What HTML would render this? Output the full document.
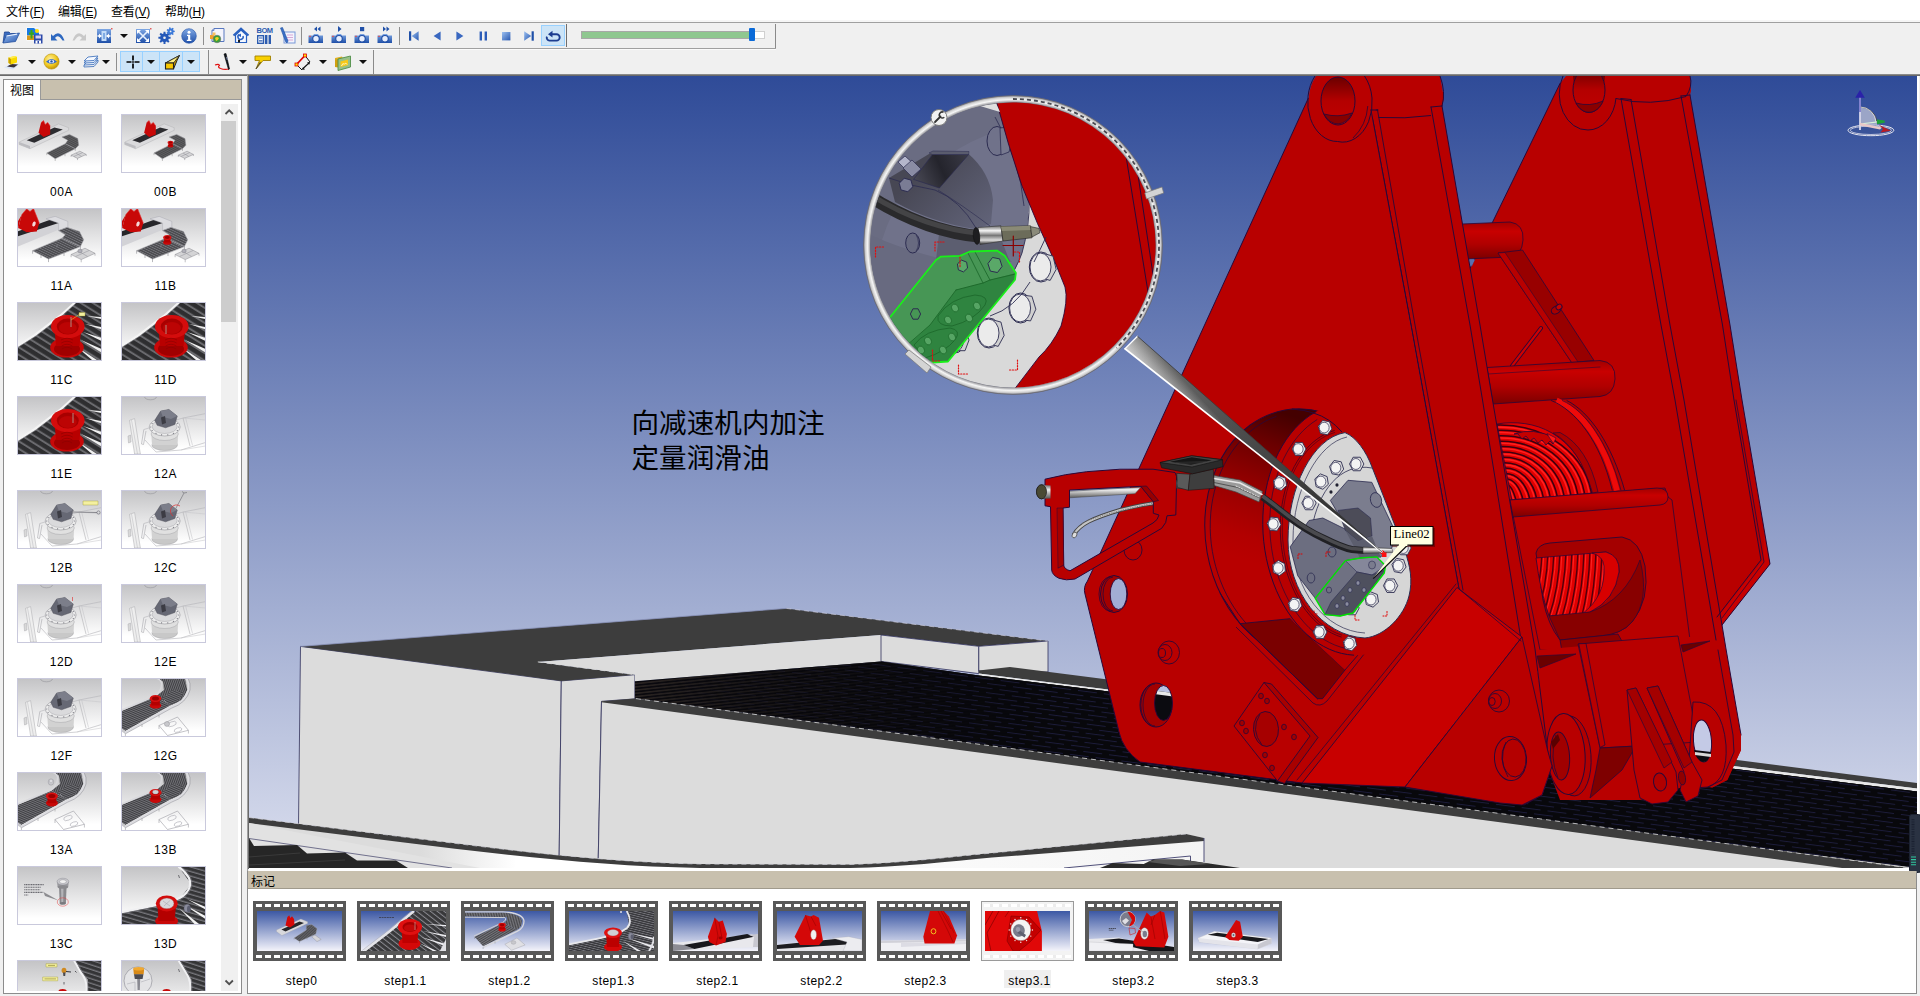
<!DOCTYPE html>
<html lang="zh-CN">
<head>
<meta charset="utf-8">
<title>3D Viewer</title>
<style>
*{box-sizing:border-box;margin:0;padding:0}
html,body{width:1920px;height:996px;overflow:hidden;background:#f0f0f0}
body{position:relative;font-family:"Liberation Sans","Noto Sans CJK SC",sans-serif;font-size:12px;color:#000}
.abs{position:absolute}
#menubar{left:0;top:0;width:1920px;height:20px;background:#fff}
#menubar span{position:absolute;top:4px;font-size:12px;line-height:16px;white-space:nowrap;letter-spacing:-0.2px}
#menubar u{text-decoration:underline;text-underline-offset:1px}
.hline{position:absolute;left:0;width:1920px;height:1px}
.vsep{position:absolute;width:1px;background:#8e8e8e}
.ico{position:absolute;width:16px;height:16px}
.dd{position:absolute;width:0;height:0;border-left:4px solid transparent;border-right:4px solid transparent;border-top:4px solid #111}
.sel{position:absolute;background:#cce4f7;border:1px solid #99d1ff}
/* left panel */
#lp{left:3px;top:79px;width:239px;height:915px;background:#fff;border:1px solid #8c8c8c}
#lptab{left:4px;top:80px;width:36px;height:21px;background:#fff}
#lpbar{left:40px;top:80px;width:201px;height:20px;background:#c8c0ae;border-left:1px solid #999;border-bottom:1px solid #999}
.thumb{position:absolute;width:85px;height:59px;border:1px solid #c9c9dc;background:linear-gradient(#c4c4c6,#ffffff 90%);overflow:hidden}
.tl{position:absolute;width:85px;text-align:center;font-size:12px;line-height:14px;letter-spacing:0.5px}
/* bottom panel */
#bp{left:247px;top:871px;width:1670px;height:123px;background:#fff;border:1px solid #8c8c8c;border-top:none}
#bpbar{left:248px;top:871px;width:1668px;height:18px;background:#c8c0ae;border-bottom:1px solid #a09a8c}
.film{position:absolute;top:901px;width:93px;height:60px;background:#585858}
.film i{position:absolute;left:4px;top:10px;width:85px;height:40px;display:block;background:linear-gradient(#3c58a4,#d8dcee 85%,#f4f4fa);overflow:hidden}
.film b{position:absolute;left:3px;width:87px;height:3px;display:block;background:repeating-linear-gradient(90deg,#fff 0,#fff 6px,#585858 6px,#585858 9px)}
.film b.t{top:3px}.film b.b{top:54px}
.fl{position:absolute;top:974px;width:93px;text-align:center;font-size:12px;line-height:14px;letter-spacing:0.45px}
#view{left:249px;top:76px;width:1668px;height:792px;overflow:hidden}
</style>
</head>
<body>
<!-- MENU -->
<div id="menubar" class="abs">
<span style="left:6px">文件(<u>F</u>)</span>
<span style="left:58px">编辑(<u>E</u>)</span>
<span style="left:111px">查看(<u>V</u>)</span>
<span style="left:165px">帮助(<u>H</u>)</span>
</div>
<div class="hline" style="top:20px;background:#f6f6f6;height:2px"></div>
<div class="hline" style="top:22px;background:#a0a0a0"></div>
<div class="hline" style="top:48px;background:#a0a0a0;width:776px"></div>
<div class="hline" style="top:49px;background:#fbfbfb;width:776px"></div>
<div class="hline" style="top:74px;background:#8a8a8a"></div>
<div class="hline" style="top:75px;background:#696969"></div>
<svg width="0" height="0" style="position:absolute"><defs>
<linearGradient id="gb" x1="0" y1="0" x2="0" y2="1"><stop offset="0" stop-color="#7fa8e4"/><stop offset="1" stop-color="#1f4fa8"/></linearGradient>
<linearGradient id="gb2" x1="0" y1="0" x2="1" y2="1"><stop offset="0" stop-color="#9cc0f0"/><stop offset="1" stop-color="#2858b0"/></linearGradient>
<linearGradient id="gy" x1="0" y1="0" x2="0" y2="1"><stop offset="0" stop-color="#ffe860"/><stop offset="1" stop-color="#d8a000"/></linearGradient>
<radialGradient id="gyr" cx="0.4" cy="0.35" r="0.7"><stop offset="0" stop-color="#fff0a0"/><stop offset="0.6" stop-color="#f0c820"/><stop offset="1" stop-color="#b88a00"/></radialGradient>
</defs></svg>
<svg class="abs" style="left:2px;top:28px" width="18" height="16" viewBox="0 0 18 16"><path d="M1,15 L2.5,4 L7,4 L8.5,5.5 L14,5.5 L14,7" fill="#3a6cc0" stroke="#1f4590" stroke-width="0.8"/><path d="M1,15 L4.5,7 L17.5,5 L13.5,13.5Z" fill="url(#gb2)" stroke="#2450a0" stroke-width="0.8"/><path d="M4.5,8 L15,6.2" stroke="#e8f0ff" stroke-width="1.2"/></svg>
<svg class="abs" style="left:26px;top:27px" width="17" height="17" viewBox="0 0 17 17"><rect x="0.5" y="0.5" width="13" height="13" fill="#fff"/><rect x="1" y="1" width="12" height="7.5" fill="#1878e0"/><path d="M8,1 L13,1 L13,6Z" fill="#e8f0ff"/><rect x="1" y="8.5" width="12" height="4.5" fill="#d89818"/><path d="M4.5,3 h2 v2.5 h1.5 v2 h-1.5 v4 h-2 v-4 h-1.5 v-2 h1.5z" fill="#38a818"/><circle cx="11" cy="4" r="2" fill="#ffe000"/><rect x="8" y="7.5" width="8.5" height="9" fill="#2a48a8"/><rect x="9.5" y="8.5" width="5.5" height="3" fill="#d8d0f0"/><rect x="9.5" y="13.5" width="5.5" height="3" fill="#fff"/><rect x="11.5" y="14" width="1.5" height="2.5" fill="#2a48a8"/></svg>
<svg class="abs" style="left:49px;top:28px" width="16" height="16" viewBox="0 0 16 16"><path d="M2,6 L2,12.5 L8.5,12.5 L6,10 Q9,5.5 13.5,12.5 L15.5,12.5 Q11,1 4,8Z" fill="#2e68c0"/></svg>
<svg class="abs" style="left:72px;top:28px" width="16" height="16" viewBox="0 0 16 16"><path d="M14,6 L14,12.5 L7.5,12.5 L10,10 Q7,5.5 2.5,12.5 L0.5,12.5 Q5,1 12,8Z" fill="#c8c8c8"/></svg>
<svg class="abs" style="left:96px;top:27px" width="17" height="17" viewBox="0 0 17 17"><rect x="1" y="2" width="14" height="14" fill="url(#gb)"/><rect x="5.5" y="4" width="5" height="10" fill="#c4dcf8"/><path d="M1.5,9 h4 M14.5,9 h-4" stroke="#fff" stroke-width="1.6"/><path d="M5.5,9 l-2.5,-2.5 v5z M10.5,9 l2.5,-2.5 v5z" fill="#fff"/><rect x="7.5" y="6" width="1" height="6" fill="#3a78d0"/><rect x="15" y="1" width="1.5" height="1.5" fill="#e06060"/></svg>
<div class="dd" style="left:119.5px;top:34px"></div>
<svg class="abs" style="left:135px;top:27px" width="17" height="17" viewBox="0 0 17 17"><rect x="1" y="2" width="14" height="14" fill="url(#gb)"/><path d="M8,9 L2.5,3.5 M8,9 L13.5,3.5 M8,9 L2.5,14.5 M8,9 L13.5,14.5" stroke="#e8f2ff" stroke-width="1.6"/><path d="M2,3 h4 l-4,4z M14,3 h-4 l4,4z M2,15 h4 l-4,-4z M14,15 h-4 l4,-4z" fill="#fff"/><rect x="15" y="1" width="1.5" height="1.5" fill="#e06060"/></svg>
<svg class="abs" style="left:158px;top:27px" width="17" height="17" viewBox="0 0 17 17"><polygon points="12.6,9.8 12.6,11.8 10.8,11.8 10.3,13.1 11.5,14.4 10.1,15.8 8.8,14.6 7.5,15.1 7.5,16.9 5.5,16.9 5.5,15.1 4.2,14.6 2.9,15.8 1.5,14.4 2.7,13.1 2.2,11.8 0.4,11.8 0.4,9.8 2.2,9.8 2.7,8.5 1.5,7.2 2.9,5.8 4.2,7.0 5.5,6.5 5.5,4.7 7.5,4.7 7.5,6.5 8.8,7.0 10.1,5.8 11.5,7.2 10.3,8.5 10.8,9.8" fill="#2458b8"/><circle cx="6.5" cy="10.8" r="1.3" fill="#f0f0f0"/><polygon points="16.7,3.7 16.7,5.1 15.5,5.3 15.1,6.1 15.7,7.2 14.7,8.1 13.7,7.2 12.8,7.4 12.3,8.6 11.0,8.3 11.1,7.0 10.4,6.4 9.2,6.8 8.6,5.6 9.6,4.9 9.6,3.9 8.6,3.2 9.2,2.0 10.4,2.4 11.1,1.8 11.0,0.5 12.3,0.2 12.8,1.4 13.7,1.6 14.7,0.7 15.7,1.6 15.1,2.7 15.5,3.5" fill="#3a78d8"/><circle cx="12.6" cy="4.4" r="0.9" fill="#f0f0f0"/></svg>
<svg class="abs" style="left:181px;top:28px" width="16" height="16" viewBox="0 0 16 16"><circle cx="8" cy="8" r="7.3" fill="url(#gb)" stroke="#2050a8" stroke-width="0.6"/><circle cx="8" cy="4.3" r="1.5" fill="#fff"/><path d="M6,6.8 h3.2 v5 h1.2 v1.2 h-4.6 v-1.2 h1.3 v-3.8 h-1.1z" fill="#fff"/></svg>
<div class="vsep" style="left:203px;top:27px;height:18px;background:#8e8e8e"></div>
<svg class="abs" style="left:209px;top:27px" width="17" height="17" viewBox="0 0 17 17"><path d="M5,1.5 h10 v13 h-12 v-11z" fill="#f4f4fc" stroke="#5878c0" stroke-width="1"/><path d="M3,3.5 h2 v-2" fill="none" stroke="#5878c0" stroke-width="0.8"/><rect x="1" y="8" width="4" height="4" fill="#f0a030"/><rect x="3.5" y="5.5" width="3" height="3" fill="#f8c060"/><circle cx="8" cy="12" r="3.8" fill="#38a038"/><path d="M6,11 q2,-2 4,0 q-1,3 -3,3z" fill="#f0d020"/><circle cx="8" cy="12" r="3.8" fill="none" stroke="#707070" stroke-width="0.6"/></svg>
<svg class="abs" style="left:232px;top:27px" width="18" height="17" viewBox="0 0 18 17"><path d="M1.5,8.5 L9,1.5 L16.5,8.5" fill="none" stroke="#2860c0" stroke-width="2"/><path d="M3.5,8 L9,3 L14.5,8 V15.5 H3.5Z" fill="#f4f8ff" stroke="#2860c0" stroke-width="1.2"/><path d="M11,9 a2.6,2.6 0 1 1 -3.5,-1.5" fill="none" stroke="#2860c0" stroke-width="1.5"/><path d="M6,8.5 l3,-2 v3.5z" fill="#2860c0"/><rect x="6" y="13" width="2" height="2.5" fill="#1a1a1a"/></svg>
<div class="abs" style="left:256.5px;top:27px;width:18px;height:8px;font:bold 7.5px/8px 'Liberation Sans',sans-serif;color:#2c5cb0;letter-spacing:-0.45px">BOM</div>
<svg class="abs" style="left:257px;top:35px" width="15" height="9" viewBox="0 0 15 9"><rect x="0.7" y="0.7" width="5.8" height="7.6" fill="#fff" stroke="#2c5cb0" stroke-width="1.4"/><path d="M2,3 h3.5 M2,5.8 h3.5" stroke="#2c5cb0" stroke-width="1.2"/><rect x="8" y="0" width="2.4" height="9" fill="#2c5cb0"/><rect x="11.6" y="0" width="2.4" height="9" fill="#2c5cb0"/></svg>
<svg class="abs" style="left:279px;top:27px" width="17" height="17" viewBox="0 0 17 17"><rect x="5" y="5" width="11" height="11" fill="#f4f4fc" stroke="#7898d8" stroke-width="1"/><path d="M8,8 h6 M8,10.5 h6 M8,13 h6" stroke="#d8a8d8" stroke-width="1"/><path d="M1.5,1 L3.5,0.5 L9,14 L8,16 L6.5,14.5Z" fill="#3a70c8" stroke="#2050a0" stroke-width="0.6"/></svg>
<div class="vsep" style="left:301px;top:27px;height:18px;background:#8e8e8e"></div>
<svg class="abs" style="left:308px;top:26px" width="16" height="18" viewBox="0 0 16 18"><path d="M9,0.5 v5 l-3,-2.5z M12.5,0.5 v5 l-3,-2.5z" fill="#2050a8"/><path d="M0.5,9.5 L5,9.5 L6,8 L10,8 L11,9.5 L15,9.5 V17 H0.5Z" fill="url(#gb)"/><circle cx="8" cy="12.8" r="3.3" fill="#e8eefc" stroke="#2050a8" stroke-width="1.2"/><rect x="1" y="9.8" width="2" height="1" fill="#e05050"/></svg>
<svg class="abs" style="left:331px;top:26px" width="16" height="18" viewBox="0 0 16 18"><path d="M7,0 v6 l3.5,-3z" fill="#2050a8"/><path d="M0.5,9.5 L5,9.5 L6,8 L10,8 L11,9.5 L15,9.5 V17 H0.5Z" fill="url(#gb)"/><circle cx="8" cy="12.8" r="3.3" fill="#e8eefc" stroke="#2050a8" stroke-width="1.2"/><rect x="1" y="9.8" width="2" height="1" fill="#e05050"/></svg>
<svg class="abs" style="left:354px;top:26px" width="16" height="18" viewBox="0 0 16 18"><rect x="6" y="1" width="4.2" height="4.2" fill="#2050a8"/><path d="M0.5,9.5 L5,9.5 L6,8 L10,8 L11,9.5 L15,9.5 V17 H0.5Z" fill="url(#gb)"/><circle cx="8" cy="12.8" r="3.3" fill="#e8eefc" stroke="#2050a8" stroke-width="1.2"/><rect x="1" y="9.8" width="2" height="1" fill="#e05050"/></svg>
<svg class="abs" style="left:377px;top:26px" width="16" height="18" viewBox="0 0 16 18"><path d="M6,0.5 v5 l3,-2.5z M9.5,0.5 v5 l3,-2.5z" fill="#2050a8"/><path d="M0.5,9.5 L5,9.5 L6,8 L10,8 L11,9.5 L15,9.5 V17 H0.5Z" fill="url(#gb)"/><circle cx="8" cy="12.8" r="3.3" fill="#e8eefc" stroke="#2050a8" stroke-width="1.2"/><rect x="1" y="9.8" width="2" height="1" fill="#e05050"/></svg>
<div class="vsep" style="left:399px;top:27px;height:18px;background:#8e8e8e"></div>
<svg class="abs" style="left:409px;top:31px" width="10" height="10" viewBox="0 0 10 10"><rect x="0" y="0.3" width="2.2" height="9.4" fill="#2050a8"/><path d="M9.6,0.3 v9.4 l-7,-4.7z" fill="url(#gb2)"/></svg>
<svg class="abs" style="left:433px;top:31px" width="8" height="10" viewBox="0 0 8 10"><path d="M7.6,0.5 v9 l-7,-4.5z" fill="#3a68c0"/></svg>
<svg class="abs" style="left:456px;top:31px" width="8" height="10" viewBox="0 0 8 10"><path d="M0.4,0.5 v9 l7,-4.5z" fill="#3a68c0"/></svg>
<svg class="abs" style="left:479px;top:31px" width="10" height="10" viewBox="0 0 10 10"><rect x="0.6" y="0.5" width="2.4" height="9" fill="#2c5cb8"/><rect x="5.6" y="0.5" width="2.4" height="9" fill="#2c5cb8"/></svg>
<svg class="abs" style="left:502px;top:32px" width="9" height="9" viewBox="0 0 9 9"><rect x="0" y="0" width="8.4" height="8.4" fill="url(#gb2)"/></svg>
<svg class="abs" style="left:524px;top:31px" width="10" height="10" viewBox="0 0 10 10"><rect x="7.6" y="0.3" width="2.2" height="9.4" fill="#2050a8"/><path d="M0.2,0.3 v9.4 l7,-4.7z" fill="url(#gb2)"/></svg>
<div class="sel" style="left:541px;top:25px;width:24px;height:21px"></div>
<svg class="abs" style="left:545px;top:30px" width="16" height="12" viewBox="0 0 16 12"><path d="M6,4.2 H11.5 a3,3 0 0 1 0,6.4 H4.5 a3,3 0 0 1 -2.6,-4" fill="none" stroke="#1c3c90" stroke-width="1.9"/><path d="M7.5,0.8 v6.8 l-4.5,-3.4z" fill="#1c3c90"/></svg>
<div class="vsep" style="left:566px;top:24px;height:23px;background:#6e6e6e"></div>
<div class="abs" style="left:581px;top:31px;width:184px;height:8px;background:#fff;border:1px solid #d0d0d0"></div>
<div class="abs" style="left:581px;top:31px;width:170px;height:8px;background:#8fc790;border:1px solid #a8a8a8;border-right:none"></div>
<div class="abs" style="left:749px;top:28px;width:6px;height:13px;background:#0a6ad8;border-radius:1px"></div>
<div class="vsep" style="left:775px;top:24px;height:24px;background:#8a8a8a"></div>
<svg class="abs" style="left:3px;top:54px" width="18" height="16" viewBox="0 0 18 16"><path d="M1,13.5 L9,9.5 L17,10 L10,15.5Z" fill="#d8e4f8"/><path d="M4,12.5 L8.5,10 L15,10.5 L11,13.5Z" fill="#3a3038"/><path d="M5.5,3.5 L12,2 L14,3 L14,8.5 L8,10.5 L5.5,9Z" fill="#f8d800"/><path d="M5.5,3.5 L8,4.8 L8,10.5 L5.5,9Z" fill="#c8a000"/><path d="M5.5,3.5 L12,2 L14,3 L8,4.8Z" fill="#ffee50"/></svg>
<div class="dd" style="left:27.5px;top:60px"></div>
<svg class="abs" style="left:43px;top:53px" width="17" height="17" viewBox="0 0 17 17"><circle cx="8.5" cy="8.5" r="7.6" fill="url(#gyr)" stroke="#b89000" stroke-width="0.6"/><path d="M3,8.7 Q8.5,3.5 14,8.7 Q8.5,13 3,8.7Z" fill="#3468c8"/><ellipse cx="8.5" cy="8.4" rx="2.8" ry="1.6" fill="#e8f0ff"/><circle cx="8.5" cy="8.4" r="1.2" fill="#2050a8"/></svg>
<div class="dd" style="left:67.5px;top:60px"></div>
<svg class="abs" style="left:83px;top:54px" width="16" height="16" viewBox="0 0 16 16"><path d="M1,11 L5,7 L15,6 L11,10.5Z" fill="#e8f0fc" stroke="#4878c0" stroke-width="0.9"/><path d="M1,9 L5,5 L15,4 L11,8.5Z" fill="#e8f0fc" stroke="#4878c0" stroke-width="0.9"/><path d="M1,7 L5,3 L15,2 L11,6.5Z" fill="#f4f8ff" stroke="#4878c0" stroke-width="0.9"/><path d="M1,11 v2 L11,12.5 L15,8 v-2" fill="none" stroke="#4878c0" stroke-width="0.9"/></svg>
<div class="dd" style="left:101.5px;top:60px"></div>
<div class="vsep" style="left:116px;top:53px;height:18px;background:#8e8e8e"></div>
<div class="sel" style="left:120px;top:51px;width:80px;height:21px"></div>
<div class="abs" style="left:142px;top:52px;width:1px;height:19px;background:#99d1ff"></div>
<div class="abs" style="left:159px;top:52px;width:1px;height:19px;background:#99d1ff"></div>
<div class="abs" style="left:182px;top:52px;width:1px;height:19px;background:#99d1ff"></div>
<svg class="abs" style="left:126px;top:55px" width="14" height="14" viewBox="0 0 14 14"><path d="M7,0.5 v5 M7,8.5 v5 M0.5,7 h5 M8.5,7 h5" stroke="#000" stroke-width="1.7"/><rect x="6.2" y="6.2" width="1.6" height="1.6" fill="#000"/></svg>
<div class="dd" style="left:147px;top:60px"></div>
<svg class="abs" style="left:164px;top:54px" width="17" height="16" viewBox="0 0 17 16"><path d="M1.5,9 L15.5,1.5 L13,6.5 L9.5,15 L9.5,9Z" fill="#c89800" stroke="#222" stroke-width="1"/><path d="M1.5,9 L15.5,1.5 L9.5,9Z" fill="#fff080" stroke="#222" stroke-width="0.8"/><rect x="1.5" y="9" width="8" height="6" fill="#f8c800" stroke="#222" stroke-width="1.1"/></svg>
<div class="dd" style="left:187px;top:60px"></div>
<div class="vsep" style="left:208px;top:50px;height:24px;background:#8a8a8a"></div>
<svg class="abs" style="left:214px;top:53px" width="18" height="18" viewBox="0 0 18 18"><path d="M1,12 q4,-1.5 4.5,0.5 q-2.5,1.5 1,3 q4,1.5 8.5,0.5" fill="none" stroke="#e01010" stroke-width="1.1"/><path d="M10,1 L12,0.5 L15.5,16 L14.5,16.5Z" fill="#101820" stroke="#000" stroke-width="0.6"/><path d="M12.5,4 l0.8,3" stroke="#8898c0" stroke-width="0.8"/></svg>
<div class="dd" style="left:238.5px;top:60px"></div>
<svg class="abs" style="left:254px;top:54px" width="18" height="16" viewBox="0 0 18 16"><path d="M1,2 H16.5 V6.5 H9 L2,15 L5.5,6.5 H1Z" fill="#f8d000" stroke="#a08000" stroke-width="0.9"/><path d="M2,15 L6.5,8" stroke="#444" stroke-width="1"/></svg>
<div class="dd" style="left:278.5px;top:60px"></div>
<svg class="abs" style="left:294px;top:53px" width="18" height="18" viewBox="0 0 18 18"><path d="M2.5,11.5 L11,2.5" stroke="#e00000" stroke-width="1.8"/><path d="M11,2.5 L16,9 M2.5,11.5 L8,17" stroke="#111" stroke-width="1"/><path d="M8.5,16 L15.5,9.5" stroke="#111" stroke-width="1.1"/><path d="M16,9 l-3,0.5 l2.2,2.2z M8,16.8 l3,-0.4 l-2,-2.2z" fill="#111"/><rect x="1" y="10" width="3" height="3" fill="#ffe000" stroke="#e00000" stroke-width="0.8"/><rect x="9.5" y="1" width="3" height="3" fill="#ffe000" stroke="#e00000" stroke-width="0.8"/></svg>
<div class="dd" style="left:318.5px;top:60px"></div>
<svg class="abs" style="left:334px;top:54px" width="18" height="17" viewBox="0 0 18 17"><path d="M1,4 L8,2.5 L9,4.5 L1,6Z" fill="#e0b020"/><path d="M1,5.5 L7,4.5 L7,14 L1,13Z" fill="#d0a010"/><path d="M4,5 L16.5,2 V13 L4,16.5Z" fill="#98c088" stroke="#50904a" stroke-width="0.9"/><path d="M6.5,7.5 L14,5.5 V11 L6.5,13Z" fill="#f8c818"/><path d="M7.5,12 q1,-3.5 3,-2 q1.5,-2 2.5,0.5" fill="none" stroke="#fff8c0" stroke-width="1"/></svg>
<div class="dd" style="left:358.5px;top:60px"></div>
<div class="vsep" style="left:373px;top:50px;height:24px;background:#8a8a8a"></div>
<!--VIEW-->
<div id="view" class="abs">
<svg width="1668" height="792" viewBox="249 76 1668 792" id="scene">
<defs>
<linearGradient id="bg" x1="0" y1="0" x2="0" y2="1"><stop offset="0" stop-color="#2f4b98"/><stop offset="1" stop-color="#dadeee"/></linearGradient>
</defs>
<rect x="249" y="76" width="1668" height="792" fill="url(#bg)"/>
<defs>
<pattern id="belt" width="26" height="9.2" patternUnits="userSpaceOnUse" patternTransform="rotate(7.3)">
<rect width="26" height="9.2" fill="#08080c"/><rect y="0" width="19" height="1" fill="#1c1c3a"/><rect x="13" y="4.6" width="19" height="1" fill="#1c1c3a"/><rect x="0" y="4.6" width="6" height="1" fill="#1c1c3a"/>
</pattern>
<pattern id="belt2" width="40" height="3.2" patternUnits="userSpaceOnUse" patternTransform="rotate(-6)">
<rect width="40" height="3.2" fill="#0c0b10"/><rect y="0" width="40" height="1.6" fill="#2c2624"/>
</pattern>
<linearGradient id="bmg" x1="635" y1="0" x2="1050" y2="0" gradientUnits="userSpaceOnUse"><stop offset="0" stop-color="#fff" stop-opacity="0"/><stop offset="1" stop-color="#fff" stop-opacity="1"/></linearGradient>
<mask id="bmask" maskUnits="userSpaceOnUse" x="600" y="600" width="1400" height="300"><rect x="600" y="600" width="1400" height="300" fill="url(#bmg)"/></mask>
<linearGradient id="beltfade" x1="603" y1="0" x2="1100" y2="0" gradientUnits="userSpaceOnUse"><stop offset="0" stop-color="#000" stop-opacity="0"/><stop offset="1" stop-color="#07070c" stop-opacity="1"/></linearGradient>
<linearGradient id="railhl" x1="249" y1="0" x2="1204" y2="0" gradientUnits="userSpaceOnUse">
<stop offset="0" stop-color="#dcdcdc"/><stop offset="0.18" stop-color="#dcdcdc"/><stop offset="0.28" stop-color="#ffffff"/><stop offset="0.5" stop-color="#ffffff"/><stop offset="1" stop-color="#f4f4f4"/></linearGradient>
</defs>
<polygon points="300.5,646.4 561.3,680.9 559,870 298,870" fill="#dcdcdc" stroke="#30305a" stroke-width="0.8" stroke-linejoin="round"/>
<polygon points="561.3,680.9 634.9,674.7 634.9,698.9 601.5,701.3 598,870 559,870" fill="#dcdcdc" stroke="#30305a" stroke-width="0.8" stroke-linejoin="round"/>
<polygon points="300.5,646.4 786.3,608.4 1048,641 978.8,646.3 881,635 537.8,661.9 634.9,674.7 561.3,680.9" fill="#3d3d3d"/>
<polygon points="537.8,661.9 881,635 881,661.4 634.9,681.2 634.9,674.7" fill="#dcdcdc"/>
<polygon points="881,635 978.8,646.3 978.8,673.6 881,661.4" fill="#dcdcdc" stroke="#30305a" stroke-width="0.8" stroke-linejoin="round"/>
<polygon points="978.8,646.3 1048,641 1048,672 978.8,671" fill="#dcdcdc" stroke="#30305a" stroke-width="0.8" stroke-linejoin="round"/>
<polygon points="978.8,670.5 1009.8,667 1917,783 1917,788.5 978.8,673.6" fill="#3d3d3d"/>
<polygon points="978.8,673.6 1917,788.5 1917,791.5 978.8,676" fill="#e8e8e8"/>
<polygon points="634.9,681.2 881,661.4 978.8,675.5 1917,791.5 1917,869 634.9,698.4" fill="url(#belt2)"/>
<polygon points="634.9,681.2 881,661.4 978.8,675.5 1917,791.5 1917,869 634.9,698.4" fill="url(#beltfade)"/>
<polygon points="634.9,681.2 881,661.4 978.8,675.5 1917,791.5 1917,869 634.9,698.4" fill="url(#belt)" mask="url(#bmask)"/>
<polygon points="601.5,701.3 1917,868 1917,870 598,870" fill="#dcdcdc"/>
<polyline points="601.5,701.3 598,870" fill="none" stroke="#30305a" stroke-width="0.8"/>
<polygon points="601.5,701.3 634.9,698.4 1917,869 1917,878 601.5,702.2" fill="#3d3d3d"/>
<polyline points="636,698.6 1917,869" fill="none" stroke="#d8d8d8" stroke-width="1" stroke-dasharray="5 4" opacity="0.8"/>
<polyline points="786.3,608.4 1048,641" fill="none" stroke="#c8c8d8" stroke-width="1" stroke-dasharray="5 4" opacity="0.7"/>
<polyline points="300.5,646.4 786.3,608.4" fill="none" stroke="#8890b8" stroke-width="0.8"/>
<polyline points="537.8,661.9 634.9,674.7" fill="none" stroke="#d8d8d8" stroke-width="1" stroke-dasharray="5 4" opacity="0.8"/>
<path d="M249,817.5 L400,836.5 C500,849 600,862 700,864 L850,864.5 C900,863 950,857 992,853 L1186,834 L1204,838 L1204,870 L249,870 Z" fill="url(#railhl)"/>
<path d="M249,817.5 L400,836.5 C500,849 600,862 700,864 L850,864.5 C900,863 950,857 992,853 L1186,834 L1204,838 L1204,841 L992,857.5 C950,861.5 900,867 850,868 L700,868 C600,866.5 500,854.5 400,842 L249,823 Z" fill="#3d3d3d"/>
<path d="M249,817.5 L400,836.5 C500,849 600,862 700,864 L850,864.5 C900,863 950,857 992,853 L1186,834" fill="none" stroke="#d0d0d8" stroke-width="1" stroke-dasharray="5 4" opacity="0.75"/>
<polyline points="1204,838 1204,862" fill="none" stroke="#50507a" stroke-width="1"/>
<polyline points="1064,868 1190.5,856 1190.5,861" fill="none" stroke="#50507a" stroke-width="1"/>
<polygon points="1100,868 1112.6,863 1143.7,864 1153,859.5 1182,859.5 1240,868" fill="#2a2a2a"/>
<polygon points="1148,862 1156,859.5 1182,859.5 1210,864 1180,866" fill="#555"/>
<polygon points="249,823 480,868 249,868" fill="#e2e2e2"/>
<polyline points="249,838.5 452,868" fill="none" stroke="#70708c" stroke-width="1"/>
<polygon points="249,838 254,846 297,845 307,853.5 345,852.5 357,860.5 396,860.5 408,868 249,868" fill="#262626"/>
<polyline points="249,857 300,853" fill="none" stroke="#3a3a3a" stroke-width="1"/>
<polyline points="249,865 345,860" fill="none" stroke="#3a3a3a" stroke-width="1"/>
<defs>
<linearGradient id="cylH" x1="0" y1="0" x2="0" y2="1"><stop offset="0" stop-color="#a00000"/><stop offset="0.25" stop-color="#c80000"/><stop offset="0.6" stop-color="#b00000"/><stop offset="1" stop-color="#7c0000"/></linearGradient>
<linearGradient id="holeG" x1="0" y1="0" x2="0" y2="1"><stop offset="0" stop-color="#6a0000"/><stop offset="0.5" stop-color="#b40000"/><stop offset="1" stop-color="#c00000"/></linearGradient>
<linearGradient id="bossG" x1="1290" y1="405" x2="1215" y2="560" gradientUnits="userSpaceOnUse"><stop offset="0" stop-color="#5e0000"/><stop offset="0.35" stop-color="#8e0000"/><stop offset="0.8" stop-color="#b40000"/><stop offset="1" stop-color="#b80000"/></linearGradient>
<pattern id="drum" width="8.2" height="8.2" patternUnits="userSpaceOnUse" patternTransform="rotate(-72)"><rect width="8.2" height="8.2" fill="#e80000"/><rect width="2.6" height="8.2" fill="#5a0010"/><rect x="2.6" width="1.6" height="8.2" fill="#b00000"/></pattern>
</defs>
<polygon points="1560,83.5 1566,76 1690,76 1691,91 1690,95 1730,325 1742,400 1770,564 1722,625 1726,649 1741,735 1741,750 1727.5,780 1712.5,787.5 1700,785 1640,780 1600,700 1470,640 1470,268.5" fill="#b80000"/>
<polygon points="1764,532 1770,564 1722,625 1721,613 1763,560" fill="#c80000"/>
<polyline points="1560,83.5 1470,268.5" fill="none" stroke="#2a0838" stroke-width="1" stroke-linecap="round"/>
<polyline points="1690,95 1730,325 1742,400 1770,564 1722,625 1726,649 1741,735" fill="none" stroke="#2a0838" stroke-width="1" stroke-linecap="round"/>
<polyline points="1681,96 1722.5,325 1734,400 1761,560 1717,617" fill="none" stroke="#2a0838" stroke-width="1" stroke-linecap="round"/>
<polyline points="1736,400 1764,562 1722,618" fill="none" stroke="#2a0838" stroke-width="0.8" stroke-linecap="round"/>
<path d="M1563,76 A28,36 0 0 0 1588,130 A28,36 0 0 0 1616,98" fill="none" stroke="#2a0838" stroke-width="1"/>
<path d="M1573,76 L1605,76 A16,23 0 0 1 1573,76Z" fill="url(#holeG)"/>
<ellipse cx="1589" cy="90" rx="16" ry="22.5" fill="url(#holeG)" stroke="#2a0838" stroke-width="1"/>
<path d="M1576,103 Q1590,107 1603,101 A16,22 0 0 1 1576,103Z" fill="#8a0000" stroke="#2a0838" stroke-width="0.8"/>
<path d="M1616,98.5 Q1650,107 1686,96.5" fill="none" stroke="#2a0838"/>
<path d="M1690,76 Q1693,86 1686,96.5" fill="none" stroke="#2a0838"/>
<polyline points="1621,98.5 1661,325 1675,400 1716,640" fill="none" stroke="#2a0838" stroke-width="1" stroke-linecap="round"/>
<polyline points="1631,99.5 1670,325 1684,400 1722,625" fill="none" stroke="#2a0838" stroke-width="1" stroke-linecap="round"/>
<polyline points="1621,98.5 1631,99.5" fill="none" stroke="#2a0838" stroke-width="1" stroke-linecap="round"/>
<polyline points="1681,96 1690,95" fill="none" stroke="#2a0838" stroke-width="1" stroke-linecap="round"/>
<path d="M1462,224 L1510,222 Q1524,224 1523,240 Q1522,256 1510,257 L1466,259 Z" fill="url(#cylH)" stroke="#2a0838" stroke-width="0.8"/>
<polygon points="1498,253 1522.5,250 1594,360.5 1571.7,362.5" fill="#980000" stroke="#2a0838" stroke-width="0.8" stroke-linejoin="round"/>
<polygon points="1498,253 1505,252.5 1578,362 1571.7,362.5" fill="#b80000" stroke="#2a0838" stroke-width="0.6" stroke-linejoin="round"/>
<ellipse cx="1556" cy="310" rx="5" ry="3.6" fill="#a80000" stroke="#2a0838" stroke-width="1" transform="rotate(-30 1556 310)"/>
<ellipse cx="1559" cy="307" rx="3.2" ry="2.6" fill="#c80000" stroke="#2a0838" stroke-width="1" transform="rotate(-30 1559 307)"/>
<polyline points="1512,366 1541,328" fill="none" stroke="#2a0838" stroke-width="4" stroke-linecap="round"/>
<polyline points="1512,366 1541,328" fill="none" stroke="#d00000" stroke-width="2.2" stroke-linecap="round"/>
<path d="M1487,367.5 L1600,360.5 Q1616,362 1615,379 Q1614,395 1600,396.5 L1493,404 Z" fill="url(#cylH)" stroke="#2a0838" stroke-width="0.8"/>
<polyline points="1488,374 1600,367" fill="none" stroke="#2a0838" stroke-width="0.6" stroke-linecap="round"/>
<polygon points="1470,259.5 1475,259.5 1471.5,267" fill="#5a70b0"/>
<path d="M1551,400.4 C1575,410 1600,440 1612.3,490.5 L1624.7,490.5 C1612,445 1590,412 1566.6,400.4Z" fill="#b00000"/>
<path d="M1556.5,400.4 C1580.5,410.5 1604.5,441 1617,490.5" fill="none" stroke="#ee0a0a" stroke-width="5.5"/>
<path d="M1551,400.4 C1575,410 1600,440 1612.3,490.5" fill="none" stroke="#2a0838" stroke-width="0.9"/>
<path d="M1566.6,400.4 C1590,412 1612,445 1624.7,490.5" fill="none" stroke="#2a0838" stroke-width="0.9"/>
<path d="M1562,400.4 C1586,411 1608.5,443 1621,490.5" fill="none" stroke="#2a0838" stroke-width="0.7"/>
<clipPath id="drumc"><path d="M1497,424 C1515,421 1535,423 1552,433 C1575,447 1588,470 1592,493 L1512,501 Z"/></clipPath>
<path d="M1497,424 C1515,421 1535,423 1552,433 C1575,447 1588,470 1592,493 L1512,501 Z" fill="#e00000"/>
<g clip-path="url(#drumc)"><path d="M1496.5,425.0 C1544.5,423.5 1589.5,454.3 1592.5,502" fill="none" stroke="#3c0010" stroke-width="1.5"/><path d="M1496.5,427.2 C1543.5,425.7 1587.3,455.3 1590.3,502" fill="none" stroke="#ff2020" stroke-width="1.6"/><path d="M1497.2,430.4 C1541.4,428.9 1582.6,457.6 1585.6,502" fill="none" stroke="#3c0010" stroke-width="1.5"/><path d="M1497.2,432.6 C1540.4,431.1 1580.4,458.6 1583.4,502" fill="none" stroke="#ff2020" stroke-width="1.6"/><path d="M1497.9,435.8 C1538.3,434.3 1575.7,461.0 1578.7,502" fill="none" stroke="#3c0010" stroke-width="1.5"/><path d="M1497.9,438.0 C1537.3,436.5 1573.5,462.0 1576.5,502" fill="none" stroke="#ff2020" stroke-width="1.6"/><path d="M1498.6,441.2 C1535.2,439.7 1568.8,464.3 1571.8,502" fill="none" stroke="#3c0010" stroke-width="1.5"/><path d="M1498.6,443.4 C1534.2,441.9 1566.6,465.3 1569.6,502" fill="none" stroke="#ff2020" stroke-width="1.6"/><path d="M1499.3,446.6 C1532.1,445.1 1561.9,467.7 1564.9,502" fill="none" stroke="#3c0010" stroke-width="1.5"/><path d="M1499.3,448.8 C1531.1,447.3 1559.7,468.7 1562.7,502" fill="none" stroke="#ff2020" stroke-width="1.6"/><path d="M1500.0,452.0 C1529.0,450.5 1555.0,471.0 1558.0,502" fill="none" stroke="#3c0010" stroke-width="1.5"/><path d="M1500.0,454.2 C1528.0,452.7 1552.8,472.0 1555.8,502" fill="none" stroke="#ff2020" stroke-width="1.6"/><path d="M1500.7,457.4 C1525.9,455.9 1548.1,474.3 1551.1,502" fill="none" stroke="#3c0010" stroke-width="1.5"/><path d="M1500.7,459.6 C1524.9,458.1 1545.9,475.3 1548.9,502" fill="none" stroke="#ff2020" stroke-width="1.6"/><path d="M1501.4,462.8 C1522.8,461.3 1541.2,477.7 1544.2,502" fill="none" stroke="#3c0010" stroke-width="1.5"/><path d="M1501.4,465.0 C1521.8,463.5 1539.0,478.7 1542.0,502" fill="none" stroke="#ff2020" stroke-width="1.6"/><path d="M1502.1,468.2 C1519.7,466.7 1534.3,481.0 1537.3,502" fill="none" stroke="#3c0010" stroke-width="1.5"/><path d="M1502.1,470.4 C1518.7,468.9 1532.1,482.0 1535.1,502" fill="none" stroke="#ff2020" stroke-width="1.6"/><path d="M1502.8,473.6 C1516.6,472.1 1527.4,484.4 1530.4,502" fill="none" stroke="#3c0010" stroke-width="1.5"/><path d="M1502.8,475.8 C1515.6,474.3 1525.2,485.4 1528.2,502" fill="none" stroke="#ff2020" stroke-width="1.6"/><path d="M1503.5,479.0 C1513.5,477.5 1520.5,487.7 1523.5,502" fill="none" stroke="#3c0010" stroke-width="1.5"/><path d="M1503.5,481.2 C1512.5,479.7 1518.3,488.7 1521.3,502" fill="none" stroke="#ff2020" stroke-width="1.6"/><path d="M1504.2,484.4 C1510.4,482.9 1513.6,491.1 1516.6,502" fill="none" stroke="#3c0010" stroke-width="1.5"/><path d="M1504.2,486.6 C1509.4,485.1 1511.4,492.1 1514.4,502" fill="none" stroke="#ff2020" stroke-width="1.6"/><path d="M1504.9,489.8 C1507.3,488.3 1506.7,494.4 1509.7,502" fill="none" stroke="#3c0010" stroke-width="1.5"/><path d="M1504.9,492.0 C1506.3,490.5 1504.5,495.4 1507.5,502" fill="none" stroke="#ff2020" stroke-width="1.6"/><path d="M1505.6,495.2 C1504.2,493.7 1499.8,497.8 1502.8,502" fill="none" stroke="#3c0010" stroke-width="1.5"/><path d="M1505.6,497.4 C1503.2,495.9 1497.6,498.8 1500.6,502" fill="none" stroke="#ff2020" stroke-width="1.6"/></g>
<path d="M1497,424 C1515,421 1535,423 1552,433 C1575,447 1588,470 1592,493 L1512,501 Z" fill="none" stroke="#2a0838" stroke-width="0.8"/>
<path d="M1518,434 l4,5 l4,-3 l4,5 l4,-3 l4,5 l4,-3 l4,5 l4,-4 l3,3 l2,-6 q-22,-11 -41,-4z" fill="#c40000" stroke="#2a0838" stroke-width="0.8"/>
<polygon points="1547,433.5 1556,438 1553.5,443.5 1549,437" fill="#ff1818" stroke="#2a0838" stroke-width="0.6" stroke-linejoin="round"/>
<path d="M1553,433 Q1580,448 1592.5,493 L1598,492 Q1588,447 1560,432.5Z" fill="#a80000" stroke="#2a0838" stroke-width="0.7"/>
<polygon points="1510,500 1665,488 1668,497 1672,500 1690,640 1600,650 1540,650" fill="#b80000" stroke="#2a0838" stroke-width="0.8" stroke-linejoin="round"/>
<path d="M1510,500 L1657,488 Q1668,488 1668,497 Q1668,504 1660,505 L1513,517Z" fill="url(#cylH)" stroke="#2a0838" stroke-width="0.8"/>
<path d="M1536,553 Q1538,544 1550,543 L1622,537 Q1640,540 1645,566 Q1650,600 1632,622 Q1622,634 1600,636 L1560,640 Q1548,625 1543,600Z" fill="#a40000" stroke="#2a0838" stroke-width="0.9"/>
<clipPath id="slotc"><path d="M1536,558 L1606,552 Q1620,556 1619,572 Q1615,600 1590,612 L1582,614 L1549,616 Q1540,590 1536,558Z"/></clipPath><path d="M1536,558 L1606,552 Q1620,556 1619,572 Q1615,600 1590,612 L1582,614 L1549,616 Q1540,590 1536,558Z" fill="#e00000"/>
<g clip-path="url(#slotc)"><path d="M1542.0,550 Q1541.0,590 1528.0,620" fill="none" stroke="#50000c" stroke-width="1.4"/><path d="M1544.0,550 Q1543.0,590 1530.0,620" fill="none" stroke="#ff2a2a" stroke-width="0.9"/><path d="M1548.0,550 Q1547.0,590 1534.6,620" fill="none" stroke="#50000c" stroke-width="1.4"/><path d="M1550.0,550 Q1549.0,590 1536.6,620" fill="none" stroke="#ff2a2a" stroke-width="0.9"/><path d="M1554.0,550 Q1553.0,590 1541.2,620" fill="none" stroke="#50000c" stroke-width="1.4"/><path d="M1556.0,550 Q1555.0,590 1543.2,620" fill="none" stroke="#ff2a2a" stroke-width="0.9"/><path d="M1560.0,550 Q1559.0,590 1547.8,620" fill="none" stroke="#50000c" stroke-width="1.4"/><path d="M1562.0,550 Q1561.0,590 1549.8,620" fill="none" stroke="#ff2a2a" stroke-width="0.9"/><path d="M1566.0,550 Q1565.0,590 1554.4,620" fill="none" stroke="#50000c" stroke-width="1.4"/><path d="M1568.0,550 Q1567.0,590 1556.4,620" fill="none" stroke="#ff2a2a" stroke-width="0.9"/><path d="M1572.0,550 Q1571.0,590 1561.0,620" fill="none" stroke="#50000c" stroke-width="1.4"/><path d="M1574.0,550 Q1573.0,590 1563.0,620" fill="none" stroke="#ff2a2a" stroke-width="0.9"/><path d="M1578.0,550 Q1577.0,590 1567.6,620" fill="none" stroke="#50000c" stroke-width="1.4"/><path d="M1580.0,550 Q1579.0,590 1569.6,620" fill="none" stroke="#ff2a2a" stroke-width="0.9"/><path d="M1584.0,550 Q1583.0,590 1574.2,620" fill="none" stroke="#50000c" stroke-width="1.4"/><path d="M1586.0,550 Q1585.0,590 1576.2,620" fill="none" stroke="#ff2a2a" stroke-width="0.9"/><path d="M1590.0,550 Q1589.0,590 1580.8,620" fill="none" stroke="#50000c" stroke-width="1.4"/><path d="M1592.0,550 Q1591.0,590 1582.8,620" fill="none" stroke="#ff2a2a" stroke-width="0.9"/><path d="M1596.0,550 Q1595.0,590 1587.4,620" fill="none" stroke="#50000c" stroke-width="1.4"/><path d="M1598.0,550 Q1597.0,590 1589.4,620" fill="none" stroke="#ff2a2a" stroke-width="0.9"/><path d="M1602.0,550 Q1601.0,590 1594.0,620" fill="none" stroke="#50000c" stroke-width="1.4"/><path d="M1604.0,550 Q1603.0,590 1596.0,620" fill="none" stroke="#ff2a2a" stroke-width="0.9"/><path d="M1608.0,550 Q1607.0,590 1600.6,620" fill="none" stroke="#50000c" stroke-width="1.4"/><path d="M1610.0,550 Q1609.0,590 1602.6,620" fill="none" stroke="#ff2a2a" stroke-width="0.9"/></g>
<path d="M1536,558 L1606,552 Q1620,556 1619,572 Q1615,600 1590,612 L1582,614 L1549,616 Q1540,590 1536,558Z" fill="none" stroke="#2a0838" stroke-width="0.8"/>
<path d="M1592,553 L1606,552 Q1620,556 1619,572 Q1615,600 1590,612 L1582,614 Q1606,596 1604,566 Q1603,556 1592,553Z" fill="#d80000" stroke="#2a0838" stroke-width="0.7"/>
<path d="M1549,616 L1590,612 Q1625,600 1640,560 Q1650,600 1632,622 Q1622,634 1600,636 L1560,640Z" fill="#880000" stroke="#2a0838" stroke-width="0.7"/>
<polygon points="1560,640 1618,634 1628,652 1563,657" fill="#8c0000" stroke="#2a0838" stroke-width="0.8" stroke-linejoin="round"/>
<polygon points="1536,650 1700,636 1741,735 1741,750 1727,780 1712,787.5 1690,785 1640,800 1560,800 1545,760" fill="#b80000"/>
<polygon points="1578,644 1678,636 1698,742 1636,746 1600,748" fill="#b80000" stroke="#2a0838" stroke-width="0.8" stroke-linejoin="round"/>
<polygon points="1600,748 1636,746 1622,770 1590,798 1596,770" fill="#7e0000" stroke="#2a0838" stroke-width="0.8" stroke-linejoin="round"/>
<ellipse cx="1572" cy="756" rx="19" ry="40" fill="#b00000" stroke="#2a0838" stroke-width="0.9" transform="rotate(-4 1572 756)"/>
<ellipse cx="1566" cy="754" rx="19" ry="40.5" fill="#b80000" stroke="#2a0838" stroke-width="1" transform="rotate(-4 1566 754)"/>
<ellipse cx="1560" cy="756" rx="9.5" ry="24" fill="#a00000" stroke="#2a0838" stroke-width="1" transform="rotate(-4 1560 756)"/>
<path d="M1556,735 Q1549,757 1558,778" fill="none" stroke="#2a0838" stroke-width="0.8"/>
<polygon points="1551,742 1558,734 1560,740 1553,749" fill="#5a0000"/>
<polygon points="1578.75,643.75 1586,643.5 1605,745 1600,747.5" fill="#b80000" stroke="#2a0838" stroke-width="0.8" stroke-linejoin="round"/>
<polygon points="1537,656 1576,654 1540,668" fill="#6a0000" stroke="#2a0838" stroke-width="0.7" stroke-linejoin="round"/>
<polygon points="1681,645 1710,641 1683,652" fill="#6a0000" stroke="#2a0838" stroke-width="0.7" stroke-linejoin="round"/>
<path d="M1693,702 Q1722,700 1726,745 Q1728,780 1708,787 Q1694,790 1688,776Z" fill="#b80000" stroke="#2a0838" stroke-width="0.9"/>
<ellipse cx="1702.5" cy="741" rx="9" ry="21" fill="#c4cae6" stroke="#2a0838" stroke-width="1" transform="rotate(-4 1702.5 741)"/>
<path d="M1694,750 L1711,752 Q1709,762 1703,762 Q1696,760 1694,750Z" fill="#0c0c12"/>
<path d="M1695,752 L1711,754 L1711,757 L1695,755Z" fill="#d8d8d8"/>
<polyline points="1718,650 1733,735 1734,752 1722,780 1708,787" fill="none" stroke="#2a0838" stroke-width="0.9" stroke-linecap="round"/>
<polygon points="1627,690 1636,688 1676,772 1678,790 1668,802 1652,804 1640,798 1634,770" fill="#b80000" stroke="#2a0838" stroke-width="0.9" stroke-linejoin="round"/>
<polygon points="1627,690 1636,688 1672,762 1664,768" fill="#a40000" stroke="#2a0838" stroke-width="0.7" stroke-linejoin="round"/>
<polygon points="1647,688 1658,686 1692,762 1702,780 1698,796 1686,802 1680,790 1684,772" fill="#b80000" stroke="#2a0838" stroke-width="0.9" stroke-linejoin="round"/>
<polygon points="1647,688 1658,686 1692,762 1684,768" fill="#a40000" stroke="#2a0838" stroke-width="0.7" stroke-linejoin="round"/>
<ellipse cx="1660" cy="782" rx="6.5" ry="9" fill="#b00000" stroke="#2a0838" stroke-width="1" transform="rotate(-8 1660 782)"/>
<ellipse cx="1682" cy="778" rx="3.5" ry="7" fill="#900000" stroke="#2a0838" stroke-width="0.8" transform="rotate(-8 1682 778)"/>
<polygon points="1360,104 1360,76 1440,76 1444,98 1442,106 1480,325 1492.5,400 1535,649 1547.5,750 1552,766 1542,795 1522,805 1459,589 1371,110" fill="#b80000"/>
<polyline points="1442,106 1480,325 1492.5,400 1535,649 1547.5,750 1551,768 1542,795 1524,805" fill="none" stroke="#2a0838" stroke-width="1" stroke-linecap="round"/>
<polyline points="1431,107 1470,325 1482.5,400 1522.5,649" fill="none" stroke="#2a0838" stroke-width="1" stroke-linecap="round"/>
<polyline points="1377.5,110 1415,325 1463,590" fill="none" stroke="#2a0838" stroke-width="0.9" stroke-linecap="round"/>
<polyline points="1371,110 1411,325 1459,589" fill="none" stroke="#2a0838" stroke-width="1" stroke-linecap="round"/>
<polyline points="1371,110 1377.5,110" fill="none" stroke="#2a0838" stroke-width="1" stroke-linecap="round"/>
<polyline points="1431,107 1442,106" fill="none" stroke="#2a0838" stroke-width="1" stroke-linecap="round"/>
<path d="M1378.5,117.5 Q1405,119 1431,115.5" fill="none" stroke="#2a0838"/>
<path d="M1440,76 Q1446,92 1442,106" fill="none" stroke="#2a0838"/>
<path d="M1308.4,98 L1087.5,581 Q1083,587 1085,594 L1119,732 Q1123,750 1140,762 L1302,783 L1459,589 L1371,110 Q1366,138 1340,141 Q1311,136 1308.4,98Z" fill="#b80000"/>
<path d="M1316,76 A29,39 0 0 0 1340,141 A29,39 0 0 0 1368,76Z" fill="#b80000"/>
<path d="M1315,76 A29.5,39.5 0 0 0 1337.5,141.5 A29.5,39.5 0 0 0 1364.5,76" fill="none" stroke="#2a0838"/>
<path d="M1353,138 Q1366.5,125 1367.8,106" fill="none" stroke="#2a0838" stroke-width="0.8"/>
<polyline points="1371,110 1411,325 1459,589" fill="none" stroke="#2a0838" stroke-width="1" stroke-linecap="round"/>
<polyline points="1371,110 1378,110" fill="none" stroke="#2a0838" stroke-width="1" stroke-linecap="round"/>
<path d="M1308.4,98 L1087.5,581 Q1083,587 1085,594 L1119,732 Q1123,750 1140,762 L1302,783" fill="none" stroke="#2a0838"/>
<ellipse cx="1338" cy="101" rx="17" ry="24" fill="url(#holeG)" stroke="#2a0838" stroke-width="1"/>
<path d="M1324,114 Q1338,118 1352,113 A17,24 0 0 1 1324,114Z" fill="#860000" stroke="#2a0838" stroke-width="0.8"/>
<polygon points="1457,587.5 1522,637 1405,787 1302,783" fill="#c80000" stroke="#2a0838" stroke-width="0.9" stroke-linejoin="round"/>
<polygon points="1522,637 1547.5,750 1552,766 1542,795 1522,805 1500,803 1405,787" fill="#b80000" stroke="#2a0838" stroke-width="0.9" stroke-linejoin="round"/>
<polyline points="1459,589 1521,641" fill="none" stroke="#2a0838" stroke-width="0.8" stroke-linecap="round"/>
<ellipse cx="1499" cy="701" rx="10.5" ry="11" fill="#b80000" stroke="#2a0838" stroke-width="0.9"/>
<ellipse cx="1495" cy="701" rx="6.5" ry="7.5" fill="#b80000" stroke="#2a0838" stroke-width="0.9"/>
<ellipse cx="1492" cy="701.5" rx="3.2" ry="4" fill="#b80000" stroke="#2a0838" stroke-width="0.9"/>
<ellipse cx="1510.5" cy="758.5" rx="16" ry="22" fill="#b80000" stroke="#2a0838" stroke-width="1" transform="rotate(-4 1510.5 758.5)"/>
<ellipse cx="1514" cy="758" rx="12" ry="19" fill="#b40000" stroke="#2a0838" stroke-width="0.9" transform="rotate(-4 1514 758)"/>
<path d="M1506,742 Q1498,760 1508,777" fill="none" stroke="#2a0838" stroke-width="0.8"/>
<defs>
<linearGradient id="bossG2" x1="1300" y1="408" x2="1225" y2="540" gradientUnits="userSpaceOnUse"><stop offset="0" stop-color="#440000"/><stop offset="0.22" stop-color="#6a0000"/><stop offset="0.55" stop-color="#980000"/><stop offset="0.85" stop-color="#b20000"/><stop offset="1" stop-color="#b80000"/></linearGradient>
<linearGradient id="pockG" x1="1230" y1="600" x2="1300" y2="640" gradientUnits="userSpaceOnUse"><stop offset="0" stop-color="#b40000"/><stop offset="1" stop-color="#9a0000"/></linearGradient>
<clipPath id="plateclip"><path d="M1308.4,98 L1087.5,581 Q1083,587 1085,594 L1119,732 Q1123,750 1140,762 L1302,783 L1459,589 L1371,110Z"/></clipPath>
</defs>
<ellipse cx="1306.8" cy="534.9" rx="101.2" ry="126.7" transform="rotate(-9.9 1306.8 534.9)" fill="url(#bossG2)" stroke="#2a0838" stroke-width="1"/>
<polyline points="1276.18,416.428 1270.39,418.762 1264.75,421.543 1259.3,424.759 1254.04,428.398 1249,432.446 1244.2,436.888 1239.65,441.706 1235.38,446.882 1231.4,452.396 1227.73,458.228 1224.37,464.354 1221.35,470.751 1218.67,477.395 1216.34,484.259 1214.38,491.319 1212.79,498.546 1211.57,505.913 1210.74,513.392 1210.29,520.954 1210.23,528.569 1210.56,536.209 1211.27,543.845 1212.36,551.446 1213.83,558.985 1215.68,566.431 1217.89,573.757 1220.46,580.934 1223.37,587.935 1226.62,594.733 1230.2,601.301 1234.09,607.615 1238.27,613.65 1242.73,619.384 1247.45,624.793 1252.41,629.859 1257.61,634.559 1263,638.878 1268.58,642.799 1274.32,646.305 1280.21,649.385" fill="none" stroke="#2a0838" stroke-width="0.8" stroke-linecap="round"/>
<polygon points="1240,623.7 1290,618.7 1345,670 1322.5,698.7 1317.5,698.7" fill="#7a0000" stroke="#2a0838" stroke-width="0.9" stroke-linejoin="round"/>
<polygon points="1290,618.7 1345,670 1378,632 1360,650 1320,640" fill="#b80000"/>
<polyline points="1220,593 1240,623.7 1317.5,698.7" fill="none" stroke="#2a0838" stroke-width="1" stroke-linecap="round"/>
<path d="M1236,627 L1313,703 Q1320,708 1327,701 L1380,634" fill="none" stroke="#2a0838" stroke-width="0.8"/>
<polyline points="1345,670 1378,632" fill="none" stroke="#2a0838" stroke-width="0.9" stroke-linecap="round"/>
<ellipse cx="1352" cy="529.4" rx="89" ry="126" transform="rotate(-4.3 1352 529.4)" fill="#b80000"/>
<polyline points="1315.59,411.966 1310.1,415.334 1304.8,419.237 1299.73,423.656 1294.9,428.571 1290.34,433.96 1286.06,439.796 1282.1,446.052 1278.47,452.7 1275.18,459.707 1272.25,467.041 1269.69,474.668 1267.52,482.552 1265.75,490.655 1264.38,498.94 1263.42,507.368 1262.88,515.899 1262.76,524.494 1263.05,533.111 1263.76,541.711 1264.89,550.254 1266.43,558.698 1268.36,567.005 1270.69,575.136 1273.4,583.052 1276.48,590.717 1279.91,598.094 1283.68,605.148 1287.77,611.848 1292.17,618.16 1296.84,624.056 1301.77,629.509 1306.94,634.491 1312.32,638.981 1317.88,642.956 1323.61,646.399 1329.47,649.293 1335.43,651.625 1341.47,653.383 1347.56,654.559 1353.68,655.149" fill="none" stroke="#2a0838" stroke-width="1" stroke-linecap="round"/>
<polyline points="1316.9,419.708 1311.97,423.056 1307.22,426.873 1302.68,431.144 1298.36,435.849 1294.29,440.969 1290.49,446.48 1286.96,452.358 1283.72,458.577 1280.8,465.111 1278.2,471.93 1275.93,479.004 1274,486.303 1272.43,493.793 1271.21,501.443 1270.36,509.219 1269.88,517.085 1269.76,525.009 1270.02,532.955 1270.64,540.887 1271.64,548.772 1272.99,556.574 1274.7,564.259 1276.76,571.794 1279.16,579.145 1281.89,586.28 1284.93,593.167 1288.28,599.776 1291.92,606.079 1295.83,612.047 1300,617.655 1304.4,622.877 1309.02,627.691 1313.84,632.075 1318.84,636.01 1323.99,639.479 1329.27,642.467 1334.66,644.96 1340.14,646.948 1345.68,648.421 1351.25,649.374" fill="none" stroke="#2a0838" stroke-width="0.7" stroke-linecap="round"/>
<polyline points="1334.24,430.567 1329.53,432.175 1324.92,434.261 1320.43,436.815 1316.1,439.824 1311.93,443.276 1307.95,447.153 1304.18,451.437 1300.63,456.109 1297.32,461.146 1294.27,466.525 1291.49,472.22 1289,478.205 1286.8,484.452 1284.9,490.932 1283.32,497.613 1282.07,504.465 1281.14,511.456 1280.54,518.552 1280.28,525.721 1280.35,532.928 1280.76,540.141 1281.51,547.325 1282.58,554.446 1283.98,561.472 1285.7,568.369 1287.73,575.104 1290.07,581.646 1292.69,587.965 1295.59,594.031 1298.76,599.816 1302.17,605.291 1305.82,610.432 1309.69,615.215 1313.75,619.617 1318,623.616 1322.4,627.196 1326.94,630.338 1331.6,633.029 1336.36,635.255 1341.19,637.006" fill="none" stroke="#5a0018" stroke-width="1" stroke-linecap="round"/>
<polyline points="1334.67,432.521 1330.09,434.095 1325.61,436.139 1321.25,438.641 1317.04,441.59 1312.99,444.973 1309.12,448.774 1305.46,452.974 1302.01,457.555 1298.8,462.494 1295.84,467.768 1293.14,473.354 1290.72,479.223 1288.59,485.35 1286.75,491.705 1285.22,498.258 1284,504.979 1283.1,511.836 1282.52,518.797 1282.27,525.83 1282.35,532.901 1282.76,539.976 1283.48,547.024 1284.53,554.011 1285.9,560.904 1287.58,567.671 1289.56,574.279 1291.83,580.699 1294.38,586.9 1297.21,592.852 1300.29,598.529 1303.61,603.903 1307.16,608.948 1310.92,613.643 1314.88,617.963 1319.01,621.89 1323.29,625.405 1327.71,628.49 1332.24,631.133 1336.86,633.32 1341.56,635.041" fill="none" stroke="#5a0018" stroke-width="0.8" stroke-linecap="round"/>
<path d="M1292,409 Q1305,410 1313.5,413 Q1330,418 1342,432" fill="none" stroke="#2a0838" stroke-width="1"/>
<path d="M1345,432.6 C1312,438 1288,488 1288,540 C1288,592 1322,636 1365,638 C1385,636 1404,616 1409,596 C1413,580 1410,566 1405,551 L1372,467 C1366,451 1356,437 1345,432.6Z" fill="#d6d6d6" stroke="#2c2c50" stroke-width="1"/>
<path d="M1347,437 C1318,443 1293,490 1293,540 C1293,590 1325,631 1365,633" fill="none" stroke="#2c2c50" stroke-width="0.7"/>
<path d="M1372,468 C1340,462 1318,492 1312,528 C1310,560 1320,590 1345,606" fill="none" stroke="#2c2c50" stroke-width="0.8"/>
<polygon points="1331.89,428.92 1327.39,434.742 1320.51,433.422 1318.11,426.28 1322.61,420.458 1329.49,421.778" fill="#e4e4e4" stroke="#2c2c50" stroke-width="0.9" stroke-linejoin="round"/><ellipse cx="1324.2" cy="427.6" rx="4.93504" ry="5.319999999999999" fill="#f4f4f4" stroke="#2c2c50" stroke-width="0.7"/>
<polygon points="1305.99,449 1302.5,455.582 1295.5,455.582 1292.01,449 1295.5,442.418 1302.5,442.418" fill="#e4e4e4" stroke="#2c2c50" stroke-width="0.9" stroke-linejoin="round"/><ellipse cx="1298.2" cy="449" rx="4.93504" ry="5.319999999999999" fill="#f4f4f4" stroke="#2c2c50" stroke-width="0.7"/>
<polygon points="1286.57,485.599 1281.21,490.485 1274.64,487.885 1273.43,480.401 1278.79,475.515 1285.36,478.115" fill="#e4e4e4" stroke="#2c2c50" stroke-width="0.9" stroke-linejoin="round"/><ellipse cx="1279.2" cy="483" rx="4.93504" ry="5.319999999999999" fill="#f4f4f4" stroke="#2c2c50" stroke-width="0.7"/>
<polygon points="1280.97,524.662 1276.95,530.888 1269.99,530.226 1267.03,523.338 1271.05,517.112 1278.01,517.774" fill="#e4e4e4" stroke="#2c2c50" stroke-width="0.9" stroke-linejoin="round"/><ellipse cx="1273.2" cy="524" rx="4.93504" ry="5.319999999999999" fill="#f4f4f4" stroke="#2c2c50" stroke-width="0.7"/>
<polygon points="1285.34,571.212 1279.61,575.571 1273.27,572.359 1272.66,564.788 1278.39,560.429 1284.73,563.641" fill="#e4e4e4" stroke="#2c2c50" stroke-width="0.9" stroke-linejoin="round"/><ellipse cx="1278.2" cy="568" rx="4.93504" ry="5.319999999999999" fill="#f4f4f4" stroke="#2c2c50" stroke-width="0.7"/>
<polygon points="1301.89,605.92 1297.39,611.742 1290.51,610.422 1288.11,603.28 1292.61,597.458 1299.49,598.778" fill="#e4e4e4" stroke="#2c2c50" stroke-width="0.9" stroke-linejoin="round"/><ellipse cx="1294.2" cy="604.6" rx="4.93504" ry="5.319999999999999" fill="#f4f4f4" stroke="#2c2c50" stroke-width="0.7"/>
<polygon points="1326.99,632 1323.5,638.582 1316.5,638.582 1313.01,632 1316.5,625.418 1323.5,625.418" fill="#e4e4e4" stroke="#2c2c50" stroke-width="0.9" stroke-linejoin="round"/><ellipse cx="1319.2" cy="632" rx="4.93504" ry="5.319999999999999" fill="#f4f4f4" stroke="#2c2c50" stroke-width="0.7"/>
<polygon points="1356.75,645.467 1351.81,650.841 1345.06,648.874 1343.25,641.533 1348.19,636.159 1354.94,638.126" fill="#e4e4e4" stroke="#2c2c50" stroke-width="0.9" stroke-linejoin="round"/><ellipse cx="1349.2" cy="643.5" rx="4.93504" ry="5.319999999999999" fill="#f4f4f4" stroke="#2c2c50" stroke-width="0.7"/>
<polygon points="1343.67,469.154 1339.05,475.13 1331.99,473.775 1329.53,466.446 1334.15,460.47 1341.21,461.825" fill="#dcdcdc" stroke="#2c2c50" stroke-width="0.9" stroke-linejoin="round"/><ellipse cx="1335.8" cy="467.8" rx="5.04912" ry="5.46" fill="#f4f4f4" stroke="#2c2c50" stroke-width="0.7"/>
<polygon points="1363.88,464 1360.29,470.755 1353.11,470.755 1349.52,464 1353.11,457.245 1360.29,457.245" fill="#dcdcdc" stroke="#2c2c50" stroke-width="0.9" stroke-linejoin="round"/><ellipse cx="1355.9" cy="464" rx="5.04912" ry="5.46" fill="#f4f4f4" stroke="#2c2c50" stroke-width="0.7"/>
<polygon points="1328.34,484.268 1322.85,489.282 1316.1,486.614 1314.86,478.932 1320.35,473.918 1327.1,476.586" fill="#dcdcdc" stroke="#2c2c50" stroke-width="0.9" stroke-linejoin="round"/><ellipse cx="1320.8" cy="481.6" rx="5.04912" ry="5.46" fill="#f4f4f4" stroke="#2c2c50" stroke-width="0.7"/>
<polygon points="1316.18,503 1312.59,509.755 1305.41,509.755 1301.82,503 1305.41,496.245 1312.59,496.245" fill="#dcdcdc" stroke="#2c2c50" stroke-width="0.9" stroke-linejoin="round"/><ellipse cx="1308.2" cy="503" rx="5.04912" ry="5.46" fill="#f4f4f4" stroke="#2c2c50" stroke-width="0.7"/>
<polygon points="1406.07,567.054 1401.45,573.03 1394.39,571.675 1391.93,564.346 1396.55,558.37 1403.61,559.725" fill="#dcdcdc" stroke="#2c2c50" stroke-width="0.9" stroke-linejoin="round"/><ellipse cx="1398.2" cy="565.7" rx="5.04912" ry="5.46" fill="#f4f4f4" stroke="#2c2c50" stroke-width="0.7"/>
<polygon points="1397.78,585.7 1394.19,592.455 1387.01,592.455 1383.42,585.7 1387.01,578.945 1394.19,578.945" fill="#dcdcdc" stroke="#2c2c50" stroke-width="0.9" stroke-linejoin="round"/><ellipse cx="1389.8" cy="585.7" rx="5.04912" ry="5.46" fill="#f4f4f4" stroke="#2c2c50" stroke-width="0.7"/>
<polygon points="1378.54,602.168 1373.05,607.182 1366.3,604.514 1365.06,596.832 1370.55,591.818 1377.3,594.486" fill="#dcdcdc" stroke="#2c2c50" stroke-width="0.9" stroke-linejoin="round"/><ellipse cx="1371.0" cy="599.5" rx="5.04912" ry="5.46" fill="#f4f4f4" stroke="#2c2c50" stroke-width="0.7"/>
<polygon points="1411.18,548 1407.59,554.755 1400.41,554.755 1396.82,548 1400.41,541.245 1407.59,541.245" fill="#dcdcdc" stroke="#2c2c50" stroke-width="0.9" stroke-linejoin="round"/><ellipse cx="1403.2" cy="548" rx="5.04912" ry="5.46" fill="#f4f4f4" stroke="#2c2c50" stroke-width="0.7"/>
<polygon points="1359.18,608 1355.59,614.755 1348.41,614.755 1344.82,608 1348.41,601.245 1355.59,601.245" fill="#dcdcdc" stroke="#2c2c50" stroke-width="0.9" stroke-linejoin="round"/><ellipse cx="1351.2" cy="608" rx="5.04912" ry="5.46" fill="#f4f4f4" stroke="#2c2c50" stroke-width="0.7"/>
<ellipse cx="1337" cy="485" rx="1.6" ry="1.8" fill="#202030"/>
<ellipse cx="1331" cy="492" rx="1.6" ry="1.8" fill="#202030"/>
<polygon points="1330.4,500.4 1348,480.3 1371.8,482.3 1393,526.8 1391.9,548 1380.6,556.9 1348,530.5" fill="#7b7d8e" stroke="#2c2c50" stroke-width="0.8" stroke-linejoin="round"/>
<polygon points="1290.2,546.8 1309,520.5 1322.8,518 1348,530.5 1380.6,556.9 1345.4,560.6 1315.3,598.3 1297.7,575.7" fill="#6c6e80" stroke="#2c2c50" stroke-width="0.8" stroke-linejoin="round"/>
<polygon points="1338,510.4 1358,508 1370.5,518 1372,536 1358,541 1345.4,530.5" fill="#4c4c58" stroke="#2c2c50" stroke-width="0.6" stroke-linejoin="round"/>
<polygon points="1345.4,530.5 1358,541 1372,536 1380.6,556.9 1360,558" fill="#5c5e6e"/>
<ellipse cx="1376" cy="500" rx="5.5" ry="7.5" fill="#7b7d8e" stroke="#2c2c50" stroke-width="0.8" transform="rotate(-15 1376 500)"/>
<ellipse cx="1332" cy="552" rx="4" ry="5" fill="#6c6e80" stroke="#2c2c50" stroke-width="0.8"/>
<ellipse cx="1311" cy="578" rx="3.8" ry="5" fill="#6c6e80" stroke="#2c2c50" stroke-width="0.8"/>
<polygon points="1315.3,598.3 1345.4,560.6 1360.5,558 1376.8,556.9 1385.6,565.7 1384.3,573 1353,613 1340,616 1325,614.6" fill="#6f7182"/>
<polygon points="1345.4,560.6 1360.5,558 1376.8,556.9 1385.6,565.7 1372,575 1357,572" fill="#85879a" stroke="#2c2c50" stroke-width="0.6" stroke-linejoin="round"/>
<polygon points="1357,572 1372,575 1385,570 1353,613 1340,616 1325,614.6 1331,602" fill="#4e505e" stroke="#2c2c50" stroke-width="0.6" stroke-linejoin="round"/>
<ellipse cx="1343" cy="598" rx="2" ry="2.3" fill="#8a8c9e" stroke="#2c2c50" stroke-width="0.6"/>
<ellipse cx="1350" cy="590" rx="2" ry="2.3" fill="#8a8c9e" stroke="#2c2c50" stroke-width="0.6"/>
<ellipse cx="1337" cy="606" rx="2" ry="2.3" fill="#8a8c9e" stroke="#2c2c50" stroke-width="0.6"/>
<ellipse cx="1347" cy="604" rx="2" ry="2.3" fill="#8a8c9e" stroke="#2c2c50" stroke-width="0.6"/>
<ellipse cx="1358" cy="583" rx="2" ry="2.3" fill="#8a8c9e" stroke="#2c2c50" stroke-width="0.6"/>
<ellipse cx="1364" cy="590" rx="2" ry="2.3" fill="#8a8c9e" stroke="#2c2c50" stroke-width="0.6"/>
<ellipse cx="1329" cy="590" rx="2.6" ry="3" fill="none" stroke="#2c2c50" stroke-width="0.7"/>
<ellipse cx="1372" cy="565" rx="3.5" ry="4" fill="#7a7c8e" stroke="#2c2c50" stroke-width="0.6"/>
<polygon points="1315.3,598.3 1345.4,560.6 1360.5,558 1376.8,556.9 1385.6,565.7 1384.3,573 1353,613 1340,616 1325,614.6" fill="none" stroke="#00e400" stroke-width="1.4" stroke-linejoin="round"/>
<polyline points="1302,554 1298,554 1298,559" fill="none" stroke="#e00000" stroke-width="1" stroke-linecap="round" stroke-dasharray="1 1.5"/>
<polyline points="1330,552 1326,552 1326,557" fill="none" stroke="#e00000" stroke-width="1" stroke-linecap="round" stroke-dasharray="1 1.5"/>
<polyline points="1383,616 1387,616 1387,611" fill="none" stroke="#e00000" stroke-width="1" stroke-linecap="round" stroke-dasharray="1 1.5"/>
<polyline points="1359,620 1355,620 1355,615" fill="none" stroke="#e00000" stroke-width="1" stroke-linecap="round" stroke-dasharray="1 1.5"/>
<polyline points="1317,614 1314,614 1314,610" fill="none" stroke="#e00000" stroke-width="1" stroke-linecap="round" stroke-dasharray="1 1.5"/>
<polyline points="1456,584 1297,780" fill="none" stroke="#2a0838" stroke-width="0.8" stroke-linecap="round"/>
<ellipse cx="1114" cy="594" rx="13.5" ry="18.5" fill="#a20000" stroke="#2a0838" stroke-width="1"/>
<path d="M1110,577 A11,17 0 0 0 1110,611" fill="none" stroke="#2a0838" stroke-width="0.8"/>
<path d="M1113,577 A10,17 0 0 0 1113,611" fill="none" stroke="#2a0838" stroke-width="0.8"/>
<ellipse cx="1118.5" cy="594" rx="8.3" ry="15.5" fill="#a2add4" stroke="#2a0838" stroke-width="0.9"/>
<ellipse cx="1156" cy="705" rx="16" ry="22" fill="#a20000" stroke="#2a0838" stroke-width="1"/>
<path d="M1151,684.5 A13,21 0 0 0 1151,725.5" fill="none" stroke="#2a0838" stroke-width="0.8"/>
<path d="M1155,684 A12,21 0 0 0 1155,726" fill="none" stroke="#2a0838" stroke-width="0.8"/>
<clipPath id="h2"><ellipse cx="1163.5" cy="703" rx="9" ry="17.5"/></clipPath>
<g clip-path="url(#h2)"><rect x="1150" y="680" width="30" height="50" fill="#0b0b10"/><polygon points="1150,680 1180,680 1180,694 1150,690" fill="#b9c1e0"/><polygon points="1150,690 1180,694 1180,697.5 1150,693.5" fill="#e8e8e8"/></g>
<ellipse cx="1163.5" cy="703" rx="9" ry="17.5" fill="none" stroke="#2a0838" stroke-width="0.9"/>
<ellipse cx="1169" cy="652.5" rx="10.5" ry="11.5" fill="#b80000" stroke="#2a0838" stroke-width="0.9"/>
<ellipse cx="1165" cy="652.5" rx="7" ry="8" fill="#b80000" stroke="#2a0838" stroke-width="0.9"/>
<ellipse cx="1162" cy="653" rx="3.5" ry="4.5" fill="#b80000" stroke="#2a0838" stroke-width="0.9"/>
<ellipse cx="1133" cy="550" rx="9" ry="10" fill="#b80000" stroke="#2a0838" stroke-width="0.9"/>
<polygon points="1264,682.5 1271.5,684 1318,737.5 1284.5,783.5 1277.5,781" fill="#a80000" stroke="#2a0838" stroke-width="0.9" stroke-linejoin="round"/>
<polygon points="1264,682.5 1310,736 1277.5,781 1234,726" fill="#b80000" stroke="#2a0838" stroke-width="0.9" stroke-linejoin="round"/>
<ellipse cx="1266" cy="729" rx="12.5" ry="17.5" fill="#a60000" stroke="#2a0838" stroke-width="0.9" transform="rotate(-3 1266 729)"/>
<path d="M1260,714 Q1250,730 1262,745" fill="none" stroke="#2a0838" stroke-width="0.8"/>
<ellipse cx="1261" cy="696" rx="2.4" ry="2.8" fill="#a00000" stroke="#2a0838" stroke-width="0.8"/>
<ellipse cx="1267" cy="701" rx="2.4" ry="2.8" fill="#a00000" stroke="#2a0838" stroke-width="0.8"/>
<ellipse cx="1284" cy="727" rx="2.4" ry="2.8" fill="#a00000" stroke="#2a0838" stroke-width="0.8"/>
<ellipse cx="1294" cy="737" rx="2.4" ry="2.8" fill="#a00000" stroke="#2a0838" stroke-width="0.8"/>
<ellipse cx="1242" cy="723" rx="2.4" ry="2.8" fill="#a00000" stroke="#2a0838" stroke-width="0.8"/>
<ellipse cx="1246" cy="731" rx="2.4" ry="2.8" fill="#a00000" stroke="#2a0838" stroke-width="0.8"/>
<ellipse cx="1265" cy="755" rx="2.4" ry="2.8" fill="#a00000" stroke="#2a0838" stroke-width="0.8"/>
<ellipse cx="1272" cy="768" rx="2.4" ry="2.8" fill="#a00000" stroke="#2a0838" stroke-width="0.8"/>
<defs>
<linearGradient id="rodG" x1="0" y1="0" x2="0" y2="1"><stop offset="0" stop-color="#6a6a6a"/><stop offset="0.35" stop-color="#f0f0f0"/><stop offset="0.6" stop-color="#b0b0b0"/><stop offset="1" stop-color="#505050"/></linearGradient>
<linearGradient id="hdlG" x1="1131" y1="356" x2="1147" y2="341" gradientUnits="userSpaceOnUse"><stop offset="0" stop-color="#c4c4c4"/><stop offset="0.5" stop-color="#8c8c8c"/><stop offset="1" stop-color="#4e4e4e"/></linearGradient>
<linearGradient id="hdlG2" x1="1125" y1="349" x2="1382" y2="552" gradientUnits="userSpaceOnUse"><stop offset="0" stop-color="#fff" stop-opacity="0.25"/><stop offset="0.6" stop-color="#000" stop-opacity="0.15"/><stop offset="1" stop-color="#000" stop-opacity="0.5"/></linearGradient>
<radialGradient id="ringG" cx="1013" cy="245" r="149.5" gradientUnits="userSpaceOnUse"><stop offset="0.948" stop-color="#55555c"/><stop offset="0.958" stop-color="#a8a8ac"/><stop offset="0.972" stop-color="#f6f6f6"/><stop offset="0.985" stop-color="#d8d8d8"/><stop offset="0.994" stop-color="#b0b0b4"/><stop offset="1" stop-color="#6c6c74"/></radialGradient>
<clipPath id="magclip"><circle cx="1013" cy="245" r="142.6"/></clipPath>
<linearGradient id="capG" x1="913" y1="180" x2="968" y2="154" gradientUnits="userSpaceOnUse"><stop offset="0" stop-color="#4a4a56"/><stop offset="0.5" stop-color="#24242c"/><stop offset="1" stop-color="#3a3a46"/></linearGradient>
<linearGradient id="nozG" x1="0" y1="225" x2="0" y2="244" gradientUnits="userSpaceOnUse"><stop offset="0" stop-color="#555"/><stop offset="0.3" stop-color="#f4f4f4"/><stop offset="0.55" stop-color="#777"/><stop offset="0.8" stop-color="#ddd"/><stop offset="1" stop-color="#444"/></linearGradient>
<linearGradient id="motG" x1="930" y1="160" x2="995" y2="225" gradientUnits="userSpaceOnUse"><stop offset="0" stop-color="#474754"/><stop offset="1" stop-color="#62647a"/></linearGradient>
</defs>
<path d="M1262.5,497 C1275,506 1283,513 1290,518 C1302,527 1312,533 1323,538 C1335,544 1343,548 1352,549.5 L1364,550.5" fill="none" stroke="#202024" stroke-width="7" stroke-linecap="butt"/>
<path d="M1262.5,496 C1275,505 1283,512 1290,517 C1302,526 1312,532 1323,537 C1335,543 1343,547 1352,548.5 L1364,549.5" fill="none" stroke="#4a4a4e" stroke-width="3.5"/>
<polygon points="1363,547 1392,548.5 1393,552.5 1363,553.5" fill="url(#rodG)" stroke="#333" stroke-width="0.5" stroke-linejoin="round"/>
<ellipse cx="1382.5" cy="552.5" rx="2" ry="2" fill="#e00000"/>
<polygon points="1214,475.5 1240,480 1262.5,491.5 1259,502 1236,492 1214,485.5" fill="#9a9a9a" stroke="#444" stroke-width="0.7" stroke-linejoin="round"/>
<polyline points="1214,478.5 1240,483 1262,494.5" fill="none" stroke="#e8e8e8" stroke-width="1.6" stroke-linecap="round"/>
<polyline points="1214,482.5 1238,487.5 1260,498" fill="none" stroke="#555" stroke-width="1.2" stroke-linecap="round"/>
<polyline points="1236,486 1259,497" fill="none" stroke="#ddd" stroke-width="1" stroke-linecap="round" stroke-dasharray="1.5 1.5"/>
<polygon points="1041.7,485 1056,485.8 1069.5,491.3 1140.8,487.2 1135,493.7 1069.5,497.8 1056,498 1041.7,498.5" fill="url(#rodG)" stroke="#444" stroke-width="0.5" stroke-linejoin="round"/>
<path d="M1073.5,535 C1080,524 1092,518.5 1120,510 C1140,505 1150,503.5 1162,502" fill="none" stroke="#444" stroke-width="4"/>
<path d="M1073.5,535 C1080,524 1092,518.5 1120,510 C1140,505 1150,503.5 1162,502" fill="none" stroke="#c4c4c4" stroke-width="2.2" />
<path d="M1082,523.5 C1092,518 1120,509.5 1162,501.5" fill="none" stroke="#777" stroke-width="0.9" stroke-dasharray="1.2 1.2"/>
<ellipse cx="1074.5" cy="535" rx="2.2" ry="3" fill="#ddd" stroke="#444" stroke-width="0.7" transform="rotate(30 1074.5 535)"/>
<path d="M1045,479.2 Q1065,474 1086.7,471.7 Q1120,468 1153,469.2 L1175,472.5 L1176.7,476.7 L1175.8,515 L1167,515.8 Q1167,523 1161.7,528.3 L1075,579 Q1066,581 1059,578.3 Q1052,575 1051.7,570 L1050.5,506.7 L1045,505.8Z M1069.5,490 L1140.8,486.3 L1153.3,501.7 L1153.3,513.3 L1159,515 Q1158,520 1153,523 L1070,570.8 Q1064,569 1063.7,565 L1063,508 L1069.5,507.2Z" fill="#b80000" fill-rule="evenodd" stroke="#2a0838" stroke-width="1"/>
<polyline points="1063.7,565 1058,568" fill="none" stroke="#2a0838" stroke-width="0.5" stroke-linecap="round"/>
<polygon points="1140.8,486.3 1146.5,486 1158.5,500.5 1153.3,501.7" fill="#960000" stroke="#2a0838" stroke-width="0.7" stroke-linejoin="round"/>
<polygon points="1063,508 1057,508 1058,568 1063.7,565" fill="#a40000" stroke="#2a0838" stroke-width="0.5" stroke-linejoin="round"/>
<ellipse cx="1041.5" cy="491.8" rx="5" ry="7" fill="#4a4a34" stroke="#222" stroke-width="0.8"/>
<polygon points="1043,485 1050.5,485.4 1050.5,498.6 1043,498.8" fill="url(#rodG)"/>
<ellipse cx="1041.5" cy="491.8" rx="5" ry="7" fill="#4a4a34" stroke="#222" stroke-width="0.8"/>
<polygon points="1176.7,480 1183.3,481.5 1183.3,488.5 1176.7,488.3" fill="url(#rodG)" stroke="#333" stroke-width="0.6" stroke-linejoin="round"/>
<polygon points="1176.7,473.3 1190,474.2 1188.3,490.3 1177.5,487.5" fill="#5a5a5a" stroke="#1a1a1a" stroke-width="0.6" stroke-linejoin="round"/>
<polygon points="1190,474.2 1213.3,469.2 1214.2,488.3 1188.3,490.3" fill="#3e3e3e" stroke="#1a1a1a" stroke-width="0.6" stroke-linejoin="round"/>
<polygon points="1160,462.5 1191.7,455.8 1222.5,459.7 1223,466.7 1192.5,473.8 1161.7,467.8" fill="#2a2a2a" stroke="#111" stroke-width="0.6" stroke-linejoin="round"/>
<polygon points="1160,462.5 1191.7,455.8 1222.5,459.7 1192,467" fill="#444" stroke="#111" stroke-width="0.6" stroke-linejoin="round"/>
<polygon points="1170,461.7 1191.7,457.3 1211.7,460.3 1191,464.8" fill="#161616"/>
<polyline points="1176,462.5 1206,461.5" fill="none" stroke="#333" stroke-width="0.7" stroke-linecap="round"/>
<polyline points="1180,463.6 1202,462.6" fill="none" stroke="#333" stroke-width="0.7" stroke-linecap="round"/>
<polygon points="1125,348.75 1137.5,336.25 1382.5,552.5" fill="url(#hdlG)"/>
<polygon points="1125,348.75 1137.5,336.25 1382.5,552.5" fill="url(#hdlG2)"/>
<polyline points="1125,348.75 1382.5,552.5" fill="none" stroke="#fff" stroke-width="1.6" stroke-linecap="round"/>
<polyline points="1125,348.75 1137.5,336.25" fill="none" stroke="#fff" stroke-width="1.2" stroke-linecap="round"/>
<polyline points="1137.5,336.25 1382.5,552.5" fill="none" stroke="#3a3a3a" stroke-width="0.8" stroke-linecap="round"/>
<circle cx="1013" cy="245" r="149.5" fill="url(#ringG)"/>
<g clip-path="url(#magclip)">
<rect x="860" y="95" width="310" height="305" fill="#70728a"/>
<path d="M860,95 L1000,95 L1000,130 Q940,150 900,200 Q875,240 872,300 L860,300Z" fill="#6a6c82"/>
<path d="M1028,196 Q1030,225 1022,253 Q1016,272 1000,292 L929,362 L905,400 L1100,400 L1100,196Z" fill="#d9d9d9"/>
<path d="M1029,200 Q1030,225 1022,253 Q1016,270 1003,288" fill="none" stroke="#2c2c50" stroke-width="0.9"/>
<path d="M995,117 Q1020,160 1024,206" fill="none" stroke="#2c2c50" stroke-width="0.8"/>
<path d="M860,230 Q900,250 955,262 L1000,250 L1012,262 L936,262 L886,322 L870,330Z" fill="#686a80"/>
<path d="M940,225 L1000,236 L1010,262 L936,260Z" fill="#5c5e70"/>
<path d="M929,154 L968,153.5 Q990,172 993,200 L991,224 L975,229 Q930,222 895,202 L889,178Z" fill="url(#motG)"/>
<path d="M889,178 Q910,186 935,190 Q960,200 976,228" fill="none" stroke="#2c2c50" stroke-width="0.8"/>
<path d="M938,190 Q962,205 990,226" fill="none" stroke="#2c2c50" stroke-width="0.6"/>
<polygon points="913.6,179.4 932.5,154.5 968.6,154.5 939.4,188" fill="url(#capG)" stroke="#2c2c50" stroke-width="0.7" stroke-linejoin="round"/>
<polygon points="929,153 933,151 969,151.5 968.6,154.5 932.5,154.5" fill="#5a5c6e" stroke="#2c2c50" stroke-width="0.5" stroke-linejoin="round"/>
<polygon points="898,162 905,156 916,166 909,173" fill="#b4b6cc" stroke="#2c2c50" stroke-width="0.7" stroke-linejoin="round"/>
<polygon points="903,168 912,160 921,169 912,177" fill="#8a8ca4" stroke="#2c2c50" stroke-width="0.7" stroke-linejoin="round"/>
<polygon points="912.761,186.812 907.812,191.761 901.05,189.95 899.239,183.188 904.188,178.239 910.95,180.05" fill="#7a7c94" stroke="#2c2c50" stroke-width="1" stroke-linejoin="round"/>
<ellipse cx="997" cy="141" rx="10" ry="14.5" fill="#70728a" stroke="#2c2c50" stroke-width="1"/>
<polygon points="1000,128 1008,127 1012,141 1009,152 1001,155" fill="#77798f" stroke="#2c2c50" stroke-width="0.8" stroke-linejoin="round"/>
<ellipse cx="912.7" cy="243" rx="7" ry="10" fill="#686a80" stroke="#2c2c50" stroke-width="1"/>
<path d="M916,234.5 Q921,243 916,251.5" fill="none" stroke="#2c2c50" stroke-width="0.7"/>
<path d="M866,194 C900,216 940,233 981,236.5" fill="none" stroke="#2a2a2c" stroke-width="12.5"/>
<path d="M866,192 C900,214 940,230 981,233.5" fill="none" stroke="#444446" stroke-width="5"/>
<polygon points="978,227.5 1001,225.8 1003,241 980,244.5" fill="url(#nozG)" stroke="#333" stroke-width="0.6" stroke-linejoin="round"/>
<polygon points="1001,226.6 1030.5,225.8 1032,237.8 1003,241" fill="#6c6c5a" stroke="#222" stroke-width="0.6" stroke-linejoin="round"/>
<polygon points="1001,226.6 1030.5,225.8 1031,230 1001.8,231" fill="#8a8a76"/>
<polygon points="1030.5,226.6 1039,228.4 1040,232.7 1032,237" fill="#8a8a7a" stroke="#222" stroke-width="0.6" stroke-linejoin="round"/>
<ellipse cx="976.5" cy="236" rx="3.2" ry="8.5" fill="#1e1e20" stroke="#111" stroke-width="0.5" transform="rotate(-5 976.5 236)"/>
<path d="M996,100 Q1008,145 1022,186 Q1037,224 1054.5,261 L1065,287 Q1068.5,300 1061,326 Q1052,345 1039,357 L1010,395 L1200,395 L1200,90 Z" fill="#b80000" stroke="#2a0838" stroke-width="0.9"/>
<polyline points="1126,156 1148.5,295" fill="none" stroke="#2a0838" stroke-width="1" stroke-linecap="round"/>
<polyline points="1138,175 1154,281" fill="none" stroke="#2a0838" stroke-width="1" stroke-linecap="round"/>
<polygon points="980,106 996,103 1000,112" fill="#e0e0e0"/>
<ellipse cx="1041" cy="267" rx="11.700000000000001" ry="15" fill="#e4e4e4" stroke="#2c2c50" stroke-width="1"/><polygon points="1056.16,269.474 1050.18,280.391 1041.02,277.916 1037.84,264.526 1043.82,253.609 1052.98,256.084" fill="#d0d0d0" stroke="#2c2c50" stroke-width="0.9" stroke-linejoin="round"/><ellipse cx="1040.5" cy="267" rx="10.5" ry="13.950000000000001" fill="#ebebeb" stroke="#2c2c50" stroke-width="0.9"/>
<ellipse cx="1020.6" cy="308" rx="11.700000000000001" ry="15" fill="#e4e4e4" stroke="#2c2c50" stroke-width="1"/><polygon points="1035.86,309.242 1030.53,320.915 1021.27,319.673 1017.34,306.758 1022.67,295.085 1031.93,296.327" fill="#d0d0d0" stroke="#2c2c50" stroke-width="0.9" stroke-linejoin="round"/><ellipse cx="1020.1" cy="308" rx="10.5" ry="13.950000000000001" fill="#ebebeb" stroke="#2c2c50" stroke-width="0.9"/>
<ellipse cx="989" cy="333" rx="11.700000000000001" ry="15" fill="#e4e4e4" stroke="#2c2c50" stroke-width="1"/><polygon points="1004.16,335.474 998.181,346.391 989.022,343.916 985.841,330.526 991.819,319.609 1000.98,322.084" fill="#d0d0d0" stroke="#2c2c50" stroke-width="0.9" stroke-linejoin="round"/><ellipse cx="988.5" cy="333" rx="10.5" ry="13.950000000000001" fill="#ebebeb" stroke="#2c2c50" stroke-width="0.9"/>
<ellipse cx="955" cy="340" rx="10.14" ry="13" fill="#e4e4e4" stroke="#2c2c50" stroke-width="1"/><polygon points="969.06,340 965.03,350.695 956.97,350.695 952.94,340 956.97,329.305 965.03,329.305" fill="#d0d0d0" stroke="#2c2c50" stroke-width="0.9" stroke-linejoin="round"/><ellipse cx="954.5" cy="340" rx="9.1" ry="12.09" fill="#ebebeb" stroke="#2c2c50" stroke-width="0.9"/>
<path d="M1046,237 Q1040,250 1034,262" fill="none" stroke="#2c2c50" stroke-width="0.9"/>
<path d="M1030,282 Q1015,308 990,316" fill="none" stroke="#2c2c50" stroke-width="0.9"/>
<polygon points="887,321 936,260 941,256.6 960,255.8 970,251.5 997,250.6 1004.7,255.8 1015.9,273 1015,279.8 948,361.5 925.6,363 908.4,348.6" fill="#2f8440"/>
<polygon points="887,321 936,260 941,256.6 960,255.8 970,251.5 997,250.6 1004.7,255.8 1015.9,273 990,280 983,283 956,290 930,325 908,345" fill="#479655"/>
<polyline points="956,290 983,283 990,280 1015.5,274" fill="none" stroke="#1e6a2c" stroke-width="1" stroke-linecap="round"/>
<polyline points="956,290 930,325 906,346" fill="none" stroke="#1e6a2c" stroke-width="0.9" stroke-linecap="round"/>
<polyline points="968,253 983,283" fill="none" stroke="#1e6a2c" stroke-width="0.9" stroke-linecap="round"/>
<polyline points="975,252 990,280" fill="none" stroke="#1e6a2c" stroke-width="0.9" stroke-linecap="round"/>
<polygon points="967.574,268.052 963.438,271.909 958.363,269.857 957.426,263.948 961.562,260.091 966.637,262.143" fill="#5aa868" stroke="#2c2c50" stroke-width="1" stroke-linejoin="round"/>
<polygon points="1002.09,266.389 997.463,272.518 990.372,271.128 987.909,263.611 992.537,257.482 999.628,258.872" fill="#5aa868" stroke="#2c2c50" stroke-width="1" stroke-linejoin="round"/>
<polygon points="920.6,314 918.05,319.196 912.95,319.196 910.4,314 912.95,308.804 918.05,308.804" fill="#479655" stroke="#2c2c50" stroke-width="1" stroke-linejoin="round"/>
<path d="M938,316 Q950,298 975,295 Q990,296 985,305 Q975,320 952,326 Q936,326 938,316Z" fill="none" stroke="#1e6a2c" stroke-width="0.9"/>
<path d="M914,345 Q925,330 950,328 Q962,330 955,340 Q945,352 925,358Z" fill="none" stroke="#1e6a2c" stroke-width="0.9"/>
<ellipse cx="955" cy="308" rx="3.2" ry="4" fill="#56a564" stroke="#1e6a2c" stroke-width="0.7" transform="rotate(-25 955 308)"/>
<ellipse cx="977" cy="306" rx="3.2" ry="4" fill="#56a564" stroke="#1e6a2c" stroke-width="0.7" transform="rotate(-25 977 306)"/>
<ellipse cx="948" cy="320" rx="3.2" ry="4" fill="#56a564" stroke="#1e6a2c" stroke-width="0.7" transform="rotate(-25 948 320)"/>
<ellipse cx="969" cy="318" rx="3.2" ry="4" fill="#56a564" stroke="#1e6a2c" stroke-width="0.7" transform="rotate(-25 969 318)"/>
<ellipse cx="928" cy="341" rx="3.2" ry="4" fill="#56a564" stroke="#1e6a2c" stroke-width="0.7" transform="rotate(-25 928 341)"/>
<ellipse cx="952" cy="337" rx="3.2" ry="4" fill="#56a564" stroke="#1e6a2c" stroke-width="0.7" transform="rotate(-25 952 337)"/>
<ellipse cx="921" cy="350" rx="3.2" ry="4" fill="#56a564" stroke="#1e6a2c" stroke-width="0.7" transform="rotate(-25 921 350)"/>
<ellipse cx="943" cy="350" rx="3.2" ry="4" fill="#56a564" stroke="#1e6a2c" stroke-width="0.7" transform="rotate(-25 943 350)"/>
<polygon points="887,321 936,260 941,256.6 960,255.8 970,251.5 997,250.6 1004.7,255.8 1015.9,273 1015,279.8 948,361.5 925.6,363 908.4,348.6" fill="none" stroke="#19f019" stroke-width="1.8" stroke-linejoin="round"/>
<polyline points="883.5,247 875.5,247 875.5,257" fill="none" stroke="#e01010" stroke-width="1.2" stroke-linecap="round" stroke-dasharray="1.2 1.6"/>
<polyline points="944,242 935,242 935,252" fill="none" stroke="#e01010" stroke-width="1.2" stroke-linecap="round" stroke-dasharray="1.2 1.6"/>
<polyline points="1014.5,252 1019.5,252 1019.5,262" fill="none" stroke="#e01010" stroke-width="1.2" stroke-linecap="round" stroke-dasharray="1.2 1.6"/>
<polyline points="1009.5,370 1017.5,370 1017.5,359" fill="none" stroke="#e01010" stroke-width="1.2" stroke-linecap="round" stroke-dasharray="1.2 1.6"/>
<polyline points="967.5,374 958.5,374 958.5,364" fill="none" stroke="#e01010" stroke-width="1.2" stroke-linecap="round" stroke-dasharray="1.2 1.6"/>
<polyline points="960,257 960,268" fill="none" stroke="#e01010" stroke-width="1.2" stroke-linecap="round" stroke-dasharray="1.2 1.6"/>
<polyline points="932.5,350 932.5,361 941,361" fill="none" stroke="#e01010" stroke-width="1.2" stroke-linecap="round" stroke-dasharray="1.2 1.6"/>
<polyline points="1003,245.5 1023,245.5" fill="none" stroke="#8a0000" stroke-width="1.2" stroke-linecap="round"/>
<polyline points="1013.3,236 1013.3,256" fill="none" stroke="#8a0000" stroke-width="1.2" stroke-linecap="round"/>
</g>
<path d="M1013,99 A146,146 0 0 1 1116.5,348" fill="none" stroke="#4a4a52" stroke-width="1.8" stroke-dasharray="4 3"/>
<circle cx="1013" cy="245" r="149.3" fill="none" stroke="#6a6a74" stroke-width="0.8"/>
<polygon points="1144.8,193 1162,187 1163.7,193 1146.5,199" fill="#d4d4d4" stroke="#777" stroke-width="0.7" stroke-linejoin="round"/>
<polygon points="905,354 909,350 931,367 927,373" fill="#d4d4d4" stroke="#777" stroke-width="0.7" stroke-linejoin="round"/>
<circle cx="939" cy="117.5" r="8" fill="#f2f2f2" stroke="#777" stroke-width="1"/>
<path d="M935,122 L940.5,116.5" stroke="#333" stroke-width="1.8" fill="none" stroke-linecap="round"/><path d="M943.5,112.2 A3,3 0 1 0 944.3,117.2" stroke="#333" stroke-width="1.5" fill="none"/>
<text x="631.5" y="432.6" font-family="'Liberation Sans','Noto Sans CJK SC',sans-serif" font-size="27.6" fill="#000">向减速机内加注</text>
<text x="631.5" y="467.8" font-family="'Liberation Sans','Noto Sans CJK SC',sans-serif" font-size="27.6" fill="#000">定量润滑油</text>
<rect x="1392" y="528" width="43" height="19" fill="#500000" opacity="0.55"/>
<polygon points="1398.4,545 1407.8,545 1373.2,578.6" fill="#ffffe1"/>
<polyline points="1407.8,545 1373.2,578.6" fill="none" stroke="#111" stroke-width="1.2"/>
<rect x="1390.5" y="526.5" width="42.5" height="18.5" fill="#ffffe1" stroke="#000" stroke-width="1"/>
<rect x="1399" y="544" width="8.4" height="2" fill="#ffffe1"/>
<text x="1393.6" y="538.2" font-family="'Liberation Serif',serif" font-size="13" fill="#000" textLength="36" lengthAdjust="spacingAndGlyphs">Line02</text>
<rect x="1382" y="552.5" width="4.5" height="4.5" fill="#ff1010"/>
<g>
<ellipse cx="1870.9" cy="130.3" rx="22.9" ry="5.4" fill="#3a4f90" fill-opacity="0.35" stroke="#e8e8f0" stroke-width="1"/>
<ellipse cx="1870.9" cy="130.3" rx="20.5" ry="4.2" fill="none" stroke="#dcdcec" stroke-width="0.8"/>
<path d="M1860,107 A17,17 0 0 1 1877,122.5 L1877,125 L1860,124.5Z" fill="#b4bad2" fill-opacity="0.8"/>
<path d="M1860,107 A17,17 0 0 1 1877,123" fill="none" stroke="#444" stroke-width="1"/>
<path d="M1860.2,107 A16,16 0 0 1 1876,122" fill="none" stroke="#e8e8e8" stroke-width="0.8"/>
<line x1="1860" y1="97" x2="1860" y2="130" stroke="#d8d8ec" stroke-width="1.8"/>
<line x1="1860" y1="97" x2="1860" y2="112" stroke="#7070c8" stroke-width="1.6"/>
<polygon points="1860,90 1855.2,97.8 1864.8,97.8" fill="#2a22a8"/>
<line x1="1860" y1="124" x2="1878" y2="121.8" stroke="#d8f0d8" stroke-width="1.2"/>
<polygon points="1877,119.5 1884.5,120.5 1885,122.5 1877,124.2" fill="#1ea038"/>
<polygon points="1860,122.8 1882,127.5 1880,129.5 1860,125.5" fill="#e8c8c8"/>
<polygon points="1879,124.8 1890.8,130.7 1880.5,132.5 1883,129" fill="#b81c24"/>
</g>

</svg>
</div>
<div class="abs" style="left:247px;top:75px;width:1px;height:796px;background:#a0a0a0"></div>
<div class="abs" style="left:248px;top:75px;width:1px;height:794px;background:#696969"></div>
<div class="abs" style="left:249px;top:868px;width:1670px;height:3px;background:#fff"></div>
<div class="abs" style="left:1917px;top:76px;width:2px;height:795px;background:#fff"></div>
<svg id="rwidget" class="abs" style="left:1909px;top:814px" width="11" height="59" viewBox="0 0 11 59"><rect x="0.5" y="0.5" width="11" height="58" rx="2" fill="#2a3242" stroke="#1c2230" stroke-width="1"/><path d="M4,5 V40" stroke="#1a2030" stroke-width="3" stroke-dasharray="0.8 0.9"/><path d="M2,43 h5 M2,45.6 h5 M2,48.2 h5 M2,50.8 h5" stroke="#2fc8a0" stroke-width="1.1"/></svg>
<div class="abs" style="left:1918px;top:577px;width:2px;height:24px;background:#fafafa"></div>
<!--LEFT PANEL-->
<div id="lp" class="abs"></div>
<div id="lpbar" class="abs"></div>
<div id="lptab" class="abs"><span style="position:absolute;left:6px;top:3px;font-size:12px;line-height:16px">视图</span></div>
<div class="abs" style="left:4px;top:101px;width:237px;height:890px;overflow:hidden">
<div class="thumb" style="left:13px;top:13px"><svg width="83" height="57" viewBox="1 1 83 57" style="display:block"><pattern id="tp0" width="1.8" height="1.8" patternUnits="userSpaceOnUse" patternTransform="rotate(-62)"><rect width="1.8" height="1.8" fill="#4a4a4c"/><rect width="0.5" height="1.8" fill="#6e6e72"/></pattern><polygon points="2.2,28.0 41.6,9.9 51.6,13.7 51.6,16.3 13.0,34.7 2.2,30.5" fill="#dadadc" stroke="#a8a8ac" stroke-width="0.4"/><polygon points="2.2,28.0 13.0,32.0 13.0,34.7 2.2,30.5" fill="#bcbcc0"/><polygon points="9.7,26.3 37.4,13.4 45.8,15.4 17.3,28.8" fill="#2c2c30"/><polygon points="21.5,18.8 24.0,8.7 26.5,6.6 28.2,10.4 30.7,8.4 33.2,12.0 33.2,20.4 26.5,23.0" fill="#c80808"/><polyline points="24.0,8.7 26.5,6.6 28.2,10.4 30.7,8.4 33.2,12.0" fill="none" stroke="#e83030" stroke-width="0.6"/><polygon points="29.8,38.9 48.3,29.7 58.3,34.7 38.2,44.8" fill="url(#tp0)" stroke="#9a9aa0" stroke-width="0.5"/><polygon points="44.9,23.0 52.5,20.4 60.8,24.6 61.7,31.3 58.3,34.7 48.3,29.7 50.8,26.3" fill="url(#tp0)" stroke="#9a9aa0" stroke-width="0.5"/><polyline points="29.8,38.9 29.8,41.1" fill="none" stroke="#888" stroke-width="0.5"/><polyline points="38.2,44.8 38.2,47.0" fill="none" stroke="#888" stroke-width="0.5"/><polyline points="48.0,40.0 48.0,42.2" fill="none" stroke="#888" stroke-width="0.5"/><polyline points="58.3,34.7 58.3,36.9" fill="none" stroke="#888" stroke-width="0.5"/><polygon points="54.1,41.2 62.9,37.2 69.2,40.4 60.5,44.4" fill="#d4d4d6" stroke="#8a8a90" stroke-width="0.5"/><polyline points="57.0,42.4 65.5,38.6" fill="none" stroke="#909098" stroke-width="0.5"/><polyline points="58.9,39.1 64.5,42.4" fill="none" stroke="#909098" stroke-width="0.5"/><polyline points="54.1,41.2 54.1,42.9" fill="none" stroke="#808088" stroke-width="0.5"/><polyline points="60.5,44.4 60.5,46.1" fill="none" stroke="#808088" stroke-width="0.5"/><polyline points="69.2,40.4 69.2,42.0" fill="none" stroke="#808088" stroke-width="0.5"/></svg></div>
<div class="tl" style="left:15px;top:84px">00A</div>
<div class="thumb" style="left:117px;top:13px"><svg width="83" height="57" viewBox="1 1 83 57" style="display:block"><pattern id="tp1" width="1.8" height="1.8" patternUnits="userSpaceOnUse" patternTransform="rotate(-62)"><rect width="1.8" height="1.8" fill="#4a4a4c"/><rect width="0.5" height="1.8" fill="#6e6e72"/></pattern><polygon points="3.8,28.0 43.2,9.9 53.2,13.7 53.2,16.3 14.6,34.7 3.8,30.5" fill="#dadadc" stroke="#a8a8ac" stroke-width="0.4"/><polygon points="3.8,28.0 14.6,32.0 14.6,34.7 3.8,30.5" fill="#bcbcc0"/><polygon points="11.3,26.3 39.0,13.4 47.4,15.4 18.9,28.8" fill="#2c2c30"/><polygon points="23.1,18.8 25.6,8.7 28.1,6.6 29.8,10.4 32.3,8.4 34.8,12.0 34.8,20.4 28.1,23.0" fill="#c80808"/><polyline points="25.6,8.7 28.1,6.6 29.8,10.4 32.3,8.4 34.8,12.0" fill="none" stroke="#e83030" stroke-width="0.6"/><polygon points="33.0,38.9 51.5,29.7 61.5,34.7 41.4,44.8" fill="url(#tp1)" stroke="#9a9aa0" stroke-width="0.5"/><polygon points="48.1,23.0 55.7,20.4 64.0,24.6 64.9,31.3 61.5,34.7 51.5,29.7 54.0,26.3" fill="url(#tp1)" stroke="#9a9aa0" stroke-width="0.5"/><polyline points="33.0,38.9 33.0,41.1" fill="none" stroke="#888" stroke-width="0.5"/><polyline points="41.4,44.8 41.4,47.0" fill="none" stroke="#888" stroke-width="0.5"/><polyline points="51.2,40.0 51.2,42.2" fill="none" stroke="#888" stroke-width="0.5"/><polyline points="61.5,34.7 61.5,36.9" fill="none" stroke="#888" stroke-width="0.5"/><ellipse cx="49.5" cy="31.9" rx="2.9" ry="1.6" fill="#c80808"/><polygon points="47.4,28.5 51.6,28.5 51.6,31.9 47.4,31.9" fill="#b40000"/><ellipse cx="49.5" cy="28.5" rx="2.9" ry="1.7" fill="#d81010"/><ellipse cx="49.5" cy="28.5" rx="1.7" ry="1.0" fill="#9a0000"/><polygon points="57.3,41.2 66.1,37.2 72.4,40.4 63.7,44.4" fill="#d4d4d6" stroke="#8a8a90" stroke-width="0.5"/><polyline points="60.2,42.4 68.7,38.6" fill="none" stroke="#909098" stroke-width="0.5"/><polyline points="62.1,39.1 67.8,42.4" fill="none" stroke="#909098" stroke-width="0.5"/><polyline points="57.3,41.2 57.3,42.9" fill="none" stroke="#808088" stroke-width="0.5"/><polyline points="63.7,44.4 63.7,46.1" fill="none" stroke="#808088" stroke-width="0.5"/><polyline points="72.4,40.4 72.4,42.0" fill="none" stroke="#808088" stroke-width="0.5"/></svg></div>
<div class="tl" style="left:119px;top:84px">00B</div>
<div class="thumb" style="left:13px;top:107px"><svg width="83" height="57" viewBox="1 1 83 57" style="display:block"><pattern id="tp2" width="2.2" height="2.2" patternUnits="userSpaceOnUse" patternTransform="rotate(-64)"><rect width="2.2" height="2.2" fill="#4c4c50"/><rect width="0.5" height="2.2" fill="#8a8a90"/></pattern><polygon points="0.5,28.5 41.6,15.1 41.6,21.8 0.5,38.6" fill="#d2d2d6"/><polygon points="0.5,23.5 33.2,11.7 41.6,15.1 0.5,28.5" fill="#26262a"/><polygon points="29.0,10.8 38.2,8.4 50.8,13.4 50.8,20.0 41.6,22.6 41.6,15.1" fill="#dcdce0" stroke="#a0a0a8" stroke-width="0.4"/><polygon points="1.3,20.1 4.7,6.7 9.7,0.8 13.0,3.5 16.5,0.5 22.3,15.1 19.8,23.5 9.7,24.3" fill="#c80808"/><polyline points="4.7,6.7 9.7,0.8 13.0,3.5 16.5,0.5 22.3,15.1" fill="none" stroke="#e83030" stroke-width="0.6"/><polygon points="0.5,14.0 4.7,6.7 1.3,20.1 0.5,21.0" fill="#c80808"/><ellipse cx="17.0" cy="16.0" rx="1.6" ry="2.6" fill="#f4d8d8" transform="rotate(20 17 16)"/><polygon points="15.6,42.7 44.9,30.2 63.4,38.6 31.5,51.1" fill="url(#tp2)" stroke="#a4a4aa" stroke-width="0.6"/><polygon points="41.6,22.6 50.0,19.3 62.5,23.5 66.7,31.8 63.4,38.6 44.9,30.2 48.3,26.8" fill="url(#tp2)" stroke="#a4a4aa" stroke-width="0.6"/><polyline points="15.6,42.7 15.6,45.7" fill="none" stroke="#8a8a90" stroke-width="0.6"/><polyline points="31.5,51.1 31.5,54.1" fill="none" stroke="#8a8a90" stroke-width="0.6"/><polyline points="24.0,47.0 24.0,50.0" fill="none" stroke="#8a8a90" stroke-width="0.6"/><polyline points="47.0,45.0 47.0,48.0" fill="none" stroke="#8a8a90" stroke-width="0.6"/><polyline points="40.0,36.5 40.0,39.5" fill="none" stroke="#8a8a90" stroke-width="0.6"/><polyline points="63.4,38.6 63.4,41.6" fill="none" stroke="#8a8a90" stroke-width="0.6"/><polygon points="54.1,46.5 68.0,40.2 78.0,45.3 64.2,51.6" fill="#d4d4d6" stroke="#8a8a90" stroke-width="0.5"/><polyline points="58.6,48.5 72.1,42.5" fill="none" stroke="#909098" stroke-width="0.5"/><polyline points="61.6,43.2 70.6,48.5" fill="none" stroke="#909098" stroke-width="0.5"/><polyline points="54.1,46.5 54.1,49.2" fill="none" stroke="#808088" stroke-width="0.5"/><polyline points="64.2,51.6 64.2,54.3" fill="none" stroke="#808088" stroke-width="0.5"/><polyline points="78.0,45.3 78.0,47.7" fill="none" stroke="#808088" stroke-width="0.5"/><ellipse cx="63.0" cy="43.0" rx="2.2" ry="1.8" fill="#b0b0b8" stroke="#70707a" stroke-width="0.4"/></svg></div>
<div class="tl" style="left:15px;top:178px">11A</div>
<div class="thumb" style="left:117px;top:107px"><svg width="83" height="57" viewBox="1 1 83 57" style="display:block"><pattern id="tp3" width="2.2" height="2.2" patternUnits="userSpaceOnUse" patternTransform="rotate(-64)"><rect width="2.2" height="2.2" fill="#4c4c50"/><rect width="0.5" height="2.2" fill="#8a8a90"/></pattern><polygon points="0.5,28.5 41.6,15.1 41.6,21.8 0.5,38.6" fill="#d2d2d6"/><polygon points="0.5,23.5 33.2,11.7 41.6,15.1 0.5,28.5" fill="#26262a"/><polygon points="29.0,10.8 38.2,8.4 50.8,13.4 50.8,20.0 41.6,22.6 41.6,15.1" fill="#dcdce0" stroke="#a0a0a8" stroke-width="0.4"/><polygon points="1.3,20.1 4.7,6.7 9.7,0.8 13.0,3.5 16.5,0.5 22.3,15.1 19.8,23.5 9.7,24.3" fill="#c80808"/><polyline points="4.7,6.7 9.7,0.8 13.0,3.5 16.5,0.5 22.3,15.1" fill="none" stroke="#e83030" stroke-width="0.6"/><polygon points="0.5,14.0 4.7,6.7 1.3,20.1 0.5,21.0" fill="#c80808"/><ellipse cx="17.0" cy="16.0" rx="1.6" ry="2.6" fill="#f4d8d8" transform="rotate(20 17 16)"/><polygon points="15.6,42.7 44.9,30.2 63.4,38.6 31.5,51.1" fill="url(#tp3)" stroke="#a4a4aa" stroke-width="0.6"/><polygon points="41.6,22.6 50.0,19.3 62.5,23.5 66.7,31.8 63.4,38.6 44.9,30.2 48.3,26.8" fill="url(#tp3)" stroke="#a4a4aa" stroke-width="0.6"/><polyline points="15.6,42.7 15.6,45.7" fill="none" stroke="#8a8a90" stroke-width="0.6"/><polyline points="31.5,51.1 31.5,54.1" fill="none" stroke="#8a8a90" stroke-width="0.6"/><polyline points="24.0,47.0 24.0,50.0" fill="none" stroke="#8a8a90" stroke-width="0.6"/><polyline points="47.0,45.0 47.0,48.0" fill="none" stroke="#8a8a90" stroke-width="0.6"/><polyline points="40.0,36.5 40.0,39.5" fill="none" stroke="#8a8a90" stroke-width="0.6"/><polyline points="63.4,38.6 63.4,41.6" fill="none" stroke="#8a8a90" stroke-width="0.6"/><ellipse cx="46.3" cy="34.5" rx="4.1" ry="2.3" fill="#c80808"/><polygon points="43.2,29.5 49.4,29.5 49.4,34.5 43.2,34.5" fill="#b40000"/><ellipse cx="46.3" cy="29.5" rx="4.1" ry="2.5" fill="#d81010"/><ellipse cx="46.3" cy="29.5" rx="2.5" ry="1.4" fill="#9a0000"/><polygon points="54.1,46.5 68.0,40.2 78.0,45.3 64.2,51.6" fill="#d4d4d6" stroke="#8a8a90" stroke-width="0.5"/><polyline points="58.6,48.5 72.1,42.5" fill="none" stroke="#909098" stroke-width="0.5"/><polyline points="61.6,43.2 70.6,48.5" fill="none" stroke="#909098" stroke-width="0.5"/><polyline points="54.1,46.5 54.1,49.2" fill="none" stroke="#808088" stroke-width="0.5"/><polyline points="64.2,51.6 64.2,54.3" fill="none" stroke="#808088" stroke-width="0.5"/><polyline points="78.0,45.3 78.0,47.7" fill="none" stroke="#808088" stroke-width="0.5"/><ellipse cx="63.0" cy="43.0" rx="2.2" ry="1.8" fill="#b0b0b8" stroke="#70707a" stroke-width="0.4"/></svg></div>
<div class="tl" style="left:119px;top:178px">11B</div>
<div class="thumb" style="left:13px;top:201px"><svg width="83" height="57" viewBox="1 1 83 57" style="display:block"><pattern id="tp4" width="6.4" height="6.4" patternUnits="userSpaceOnUse" patternTransform="rotate(-58)"><rect width="6.4" height="6.4" fill="#2e2e30"/><rect width="2.0" height="6.4" fill="#6a6a6e"/></pattern><polygon points="0.5,44.0 18.0,33.0 43.0,14.0 58.0,0.5 84.5,0.5 84.5,58.0 0.5,58.0" fill="url(#tp4)"/><polygon points="66.0,30.0 84.5,36.0 84.5,39.0" fill="#f0f0f0"/><polygon points="64.0,38.0 84.5,47.0 84.5,50.5" fill="#f0f0f0"/><polygon points="60.0,45.0 80.0,58.0 75.0,58.0" fill="#f0f0f0"/><polygon points="68.0,22.0 84.5,25.0 84.5,27.5" fill="#f0f0f0"/><polygon points="70.0,14.0 84.5,15.0 84.5,17.0" fill="#f0f0f0"/><polyline points="0.5,44.0 18.0,33.0 43.0,14.0 58.0,0.5" fill="none" stroke="#f4f4f4" stroke-width="2.2"/><polyline points="0.5,45.6 18.0,34.6 43.6,15.4 59.6,0.5" fill="none" stroke="#9a9aa0" stroke-width="0.5"/><ellipse cx="50.0" cy="45.6" rx="16.8" ry="10.0" fill="#c80808"/><ellipse cx="50.0" cy="47.0" rx="13.0" ry="7.0" fill="#a00000"/><polygon points="37.4,27.0 64.2,27.0 62.5,44.0 39.1,44.0" fill="#b80000"/><ellipse cx="50.8" cy="24.6" rx="16.8" ry="11.7" fill="#d40c0c"/><ellipse cx="50.8" cy="24.6" rx="11.0" ry="8.0" fill="#a80000"/><ellipse cx="50.8" cy="26.0" rx="9.0" ry="6.0" fill="#bc0404"/><path d="M44.0,38 Q50,34.5 56.0,38" fill="none" stroke="#8a0000" stroke-width="0.6"/><path d="M44.3,41 Q50,37.5 55.7,41" fill="none" stroke="#8a0000" stroke-width="0.6"/><path d="M44.6,44 Q50,40.5 55.4,44" fill="none" stroke="#8a0000" stroke-width="0.6"/><path d="M44.9,47 Q50,43.5 55.1,47" fill="none" stroke="#8a0000" stroke-width="0.6"/><polyline points="54.0,15.0 54.0,25.0" fill="none" stroke="#b09890" stroke-width="0.9"/><polyline points="54.0,18.0 63.0,12.0" fill="none" stroke="#e8c830" stroke-width="0.6"/><polygon points="62.0,10.5 68.0,10.5 68.0,14.0 62.0,14.0" fill="#f4f0a0" stroke="#a09830" stroke-width="0.4"/></svg></div>
<div class="tl" style="left:15px;top:272px">11C</div>
<div class="thumb" style="left:117px;top:201px"><svg width="83" height="57" viewBox="1 1 83 57" style="display:block"><pattern id="tp5" width="6.4" height="6.4" patternUnits="userSpaceOnUse" patternTransform="rotate(-58)"><rect width="6.4" height="6.4" fill="#2e2e30"/><rect width="2.0" height="6.4" fill="#6a6a6e"/></pattern><polygon points="0.5,44.0 18.0,33.0 43.0,14.0 58.0,0.5 84.5,0.5 84.5,58.0 0.5,58.0" fill="url(#tp5)"/><polygon points="66.0,30.0 84.5,36.0 84.5,39.0" fill="#f0f0f0"/><polygon points="64.0,38.0 84.5,47.0 84.5,50.5" fill="#f0f0f0"/><polygon points="60.0,45.0 80.0,58.0 75.0,58.0" fill="#f0f0f0"/><polygon points="68.0,22.0 84.5,25.0 84.5,27.5" fill="#f0f0f0"/><polygon points="70.0,14.0 84.5,15.0 84.5,17.0" fill="#f0f0f0"/><polyline points="0.5,44.0 18.0,33.0 43.0,14.0 58.0,0.5" fill="none" stroke="#f4f4f4" stroke-width="2.2"/><polyline points="0.5,45.6 18.0,34.6 43.6,15.4 59.6,0.5" fill="none" stroke="#9a9aa0" stroke-width="0.5"/><ellipse cx="50.0" cy="45.6" rx="16.8" ry="10.0" fill="#c80808"/><ellipse cx="50.0" cy="47.0" rx="13.0" ry="7.0" fill="#a00000"/><polygon points="37.4,27.0 64.2,27.0 62.5,44.0 39.1,44.0" fill="#b80000"/><ellipse cx="50.8" cy="24.6" rx="16.8" ry="11.7" fill="#d40c0c"/><ellipse cx="50.8" cy="24.6" rx="11.0" ry="8.0" fill="#a80000"/><ellipse cx="50.8" cy="26.0" rx="9.0" ry="6.0" fill="#bc0404"/><path d="M44.0,38 Q50,34.5 56.0,38" fill="none" stroke="#8a0000" stroke-width="0.6"/><path d="M44.3,41 Q50,37.5 55.7,41" fill="none" stroke="#8a0000" stroke-width="0.6"/><path d="M44.6,44 Q50,40.5 55.4,44" fill="none" stroke="#8a0000" stroke-width="0.6"/><path d="M44.9,47 Q50,43.5 55.1,47" fill="none" stroke="#8a0000" stroke-width="0.6"/><polyline points="45.0,23.0 45.0,32.0" fill="none" stroke="#b09890" stroke-width="0.9"/></svg></div>
<div class="tl" style="left:119px;top:272px">11D</div>
<div class="thumb" style="left:13px;top:295px"><svg width="83" height="57" viewBox="1 1 83 57" style="display:block"><pattern id="tp6" width="6.4" height="6.4" patternUnits="userSpaceOnUse" patternTransform="rotate(-58)"><rect width="6.4" height="6.4" fill="#2e2e30"/><rect width="2.0" height="6.4" fill="#6a6a6e"/></pattern><polygon points="0.5,44.0 18.0,33.0 43.0,14.0 58.0,0.5 84.5,0.5 84.5,58.0 0.5,58.0" fill="url(#tp6)"/><polygon points="66.0,30.0 84.5,36.0 84.5,39.0" fill="#f0f0f0"/><polygon points="64.0,38.0 84.5,47.0 84.5,50.5" fill="#f0f0f0"/><polygon points="60.0,45.0 80.0,58.0 75.0,58.0" fill="#f0f0f0"/><polygon points="68.0,22.0 84.5,25.0 84.5,27.5" fill="#f0f0f0"/><polygon points="70.0,14.0 84.5,15.0 84.5,17.0" fill="#f0f0f0"/><polyline points="0.5,44.0 18.0,33.0 43.0,14.0 58.0,0.5" fill="none" stroke="#f4f4f4" stroke-width="2.2"/><polyline points="0.5,45.6 18.0,34.6 43.6,15.4 59.6,0.5" fill="none" stroke="#9a9aa0" stroke-width="0.5"/><ellipse cx="50.0" cy="45.6" rx="16.8" ry="10.0" fill="#c80808"/><ellipse cx="50.0" cy="47.0" rx="13.0" ry="7.0" fill="#a00000"/><polygon points="37.4,27.0 64.2,27.0 62.5,44.0 39.1,44.0" fill="#b80000"/><ellipse cx="50.8" cy="24.6" rx="16.8" ry="11.7" fill="#d40c0c"/><ellipse cx="50.8" cy="24.6" rx="11.0" ry="8.0" fill="#a80000"/><ellipse cx="50.8" cy="26.0" rx="9.0" ry="6.0" fill="#bc0404"/><path d="M44.0,38 Q50,34.5 56.0,38" fill="none" stroke="#8a0000" stroke-width="0.6"/><path d="M44.3,41 Q50,37.5 55.7,41" fill="none" stroke="#8a0000" stroke-width="0.6"/><path d="M44.6,44 Q50,40.5 55.4,44" fill="none" stroke="#8a0000" stroke-width="0.6"/><path d="M44.9,47 Q50,43.5 55.1,47" fill="none" stroke="#8a0000" stroke-width="0.6"/><polyline points="56.0,17.0 56.0,27.0" fill="none" stroke="#b09890" stroke-width="0.9"/></svg></div>
<div class="tl" style="left:15px;top:366px">11E</div>
<div class="thumb" style="left:117px;top:295px"><svg width="83" height="57" viewBox="1 1 83 57" style="display:block"><ellipse cx="29.5" cy="0.8" rx="6.0" ry="3.0" fill="none" stroke="#8a8a90" stroke-width="0.5"/><polygon points="8.5,24.3 13.6,22.6 19.4,58.0 13.6,58.0" fill="#eeeeee" stroke="#a8a8ac" stroke-width="0.5"/><polyline points="10.5,24.0 16.5,58.0" fill="none" stroke="#b8b8bc" stroke-width="0.5"/><polygon points="7.0,40.0 9.5,39.0 10.0,46.0 7.5,47.0" fill="#d8d8d8" stroke="#a0a0a4" stroke-width="0.4"/><polyline points="22.8,33.5 62.0,22.0 84.5,17.6" fill="none" stroke="#b4b4b8" stroke-width="0.6"/><polyline points="62.0,22.0 84.5,24.0" fill="none" stroke="#c4c4c8" stroke-width="0.5"/><polyline points="22.8,33.5 20.5,48.0 22.5,48.5 25.0,35.0" fill="none" stroke="#a8a8ac" stroke-width="0.6"/><polyline points="24.0,44.0 35.0,56.0 60.0,54.0 84.5,46.5" fill="none" stroke="#b4b4b8" stroke-width="0.6"/><polyline points="60.0,54.0 84.5,50.0" fill="none" stroke="#c4c4c8" stroke-width="0.5"/><polyline points="62.0,22.0 69.0,50.0" fill="none" stroke="#b0b0b4" stroke-width="0.6"/><polyline points="64.5,21.5 71.5,49.5" fill="none" stroke="#c0c0c4" stroke-width="0.5"/><ellipse cx="43.7" cy="49.0" rx="12.8" ry="5.5" fill="#c8c8c8" stroke="#9a9a9e" stroke-width="0.4"/><polygon points="30.3,37.0 57.2,37.0 56.5,49.0 31.0,49.0" fill="#d2d2d2"/><ellipse cx="43.7" cy="38.0" rx="13.6" ry="6.5" fill="#e0e0e0" stroke="#9a9a9e" stroke-width="0.4"/><ellipse cx="43.7" cy="31.0" rx="15.5" ry="9.0" fill="#ececec" stroke="#88888e" stroke-width="0.5"/><ellipse cx="43.7" cy="30.5" rx="12.5" ry="7.0" fill="#dadadc" stroke="#9a9aa0" stroke-width="0.4"/><ellipse cx="57.7" cy="31.0" rx="0.6" ry="0.6" fill="#70707a"/><ellipse cx="56.3" cy="34.5" rx="0.6" ry="0.6" fill="#70707a"/><ellipse cx="52.4" cy="37.3" rx="0.6" ry="0.6" fill="#70707a"/><ellipse cx="46.8" cy="38.8" rx="0.6" ry="0.6" fill="#70707a"/><ellipse cx="40.6" cy="38.8" rx="0.6" ry="0.6" fill="#70707a"/><ellipse cx="35.0" cy="37.3" rx="0.6" ry="0.6" fill="#70707a"/><ellipse cx="31.1" cy="34.5" rx="0.6" ry="0.6" fill="#70707a"/><ellipse cx="29.7" cy="31.0" rx="0.6" ry="0.6" fill="#70707a"/><ellipse cx="31.1" cy="27.5" rx="0.6" ry="0.6" fill="#70707a"/><ellipse cx="35.0" cy="24.7" rx="0.6" ry="0.6" fill="#70707a"/><ellipse cx="40.6" cy="23.2" rx="0.6" ry="0.6" fill="#70707a"/><ellipse cx="46.8" cy="23.2" rx="0.6" ry="0.6" fill="#70707a"/><ellipse cx="52.4" cy="24.7" rx="0.6" ry="0.6" fill="#70707a"/><ellipse cx="56.3" cy="27.5" rx="0.6" ry="0.6" fill="#70707a"/><polygon points="33.7,24.3 39.6,15.1 47.9,13.4 56.3,20.1 53.8,28.5 44.6,31.8 36.2,29.3" fill="#666874" stroke="#44454e" stroke-width="0.4"/><polygon points="39.6,15.1 47.9,13.4 56.3,20.1 50.0,23.0 42.0,21.0" fill="#7c7e8a"/><polygon points="40.0,21.5 44.0,20.0 45.0,27.0 41.0,28.5" fill="#3c3c44"/></svg></div>
<div class="tl" style="left:119px;top:366px">12A</div>
<div class="thumb" style="left:13px;top:389px"><svg width="83" height="57" viewBox="1 1 83 57" style="display:block"><ellipse cx="29.5" cy="0.8" rx="6.0" ry="3.0" fill="none" stroke="#8a8a90" stroke-width="0.5"/><polygon points="8.5,24.3 13.6,22.6 19.4,58.0 13.6,58.0" fill="#eeeeee" stroke="#a8a8ac" stroke-width="0.5"/><polyline points="10.5,24.0 16.5,58.0" fill="none" stroke="#b8b8bc" stroke-width="0.5"/><polygon points="7.0,40.0 9.5,39.0 10.0,46.0 7.5,47.0" fill="#d8d8d8" stroke="#a0a0a4" stroke-width="0.4"/><polyline points="22.8,33.5 62.0,22.0 84.5,17.6" fill="none" stroke="#b4b4b8" stroke-width="0.6"/><polyline points="62.0,22.0 84.5,24.0" fill="none" stroke="#c4c4c8" stroke-width="0.5"/><polyline points="22.8,33.5 20.5,48.0 22.5,48.5 25.0,35.0" fill="none" stroke="#a8a8ac" stroke-width="0.6"/><polyline points="24.0,44.0 35.0,56.0 60.0,54.0 84.5,46.5" fill="none" stroke="#b4b4b8" stroke-width="0.6"/><polyline points="60.0,54.0 84.5,50.0" fill="none" stroke="#c4c4c8" stroke-width="0.5"/><polyline points="62.0,22.0 69.0,50.0" fill="none" stroke="#b0b0b4" stroke-width="0.6"/><polyline points="64.5,21.5 71.5,49.5" fill="none" stroke="#c0c0c4" stroke-width="0.5"/><ellipse cx="43.7" cy="49.0" rx="12.8" ry="5.5" fill="#c8c8c8" stroke="#9a9a9e" stroke-width="0.4"/><polygon points="30.3,37.0 57.2,37.0 56.5,49.0 31.0,49.0" fill="#d2d2d2"/><ellipse cx="43.7" cy="38.0" rx="13.6" ry="6.5" fill="#e0e0e0" stroke="#9a9a9e" stroke-width="0.4"/><ellipse cx="43.7" cy="31.0" rx="15.5" ry="9.0" fill="#ececec" stroke="#88888e" stroke-width="0.5"/><ellipse cx="43.7" cy="30.5" rx="12.5" ry="7.0" fill="#dadadc" stroke="#9a9aa0" stroke-width="0.4"/><ellipse cx="57.7" cy="31.0" rx="0.6" ry="0.6" fill="#70707a"/><ellipse cx="56.3" cy="34.5" rx="0.6" ry="0.6" fill="#70707a"/><ellipse cx="52.4" cy="37.3" rx="0.6" ry="0.6" fill="#70707a"/><ellipse cx="46.8" cy="38.8" rx="0.6" ry="0.6" fill="#70707a"/><ellipse cx="40.6" cy="38.8" rx="0.6" ry="0.6" fill="#70707a"/><ellipse cx="35.0" cy="37.3" rx="0.6" ry="0.6" fill="#70707a"/><ellipse cx="31.1" cy="34.5" rx="0.6" ry="0.6" fill="#70707a"/><ellipse cx="29.7" cy="31.0" rx="0.6" ry="0.6" fill="#70707a"/><ellipse cx="31.1" cy="27.5" rx="0.6" ry="0.6" fill="#70707a"/><ellipse cx="35.0" cy="24.7" rx="0.6" ry="0.6" fill="#70707a"/><ellipse cx="40.6" cy="23.2" rx="0.6" ry="0.6" fill="#70707a"/><ellipse cx="46.8" cy="23.2" rx="0.6" ry="0.6" fill="#70707a"/><ellipse cx="52.4" cy="24.7" rx="0.6" ry="0.6" fill="#70707a"/><ellipse cx="56.3" cy="27.5" rx="0.6" ry="0.6" fill="#70707a"/><polygon points="33.7,24.3 39.6,15.1 47.9,13.4 56.3,20.1 53.8,28.5 44.6,31.8 36.2,29.3" fill="#666874" stroke="#44454e" stroke-width="0.4"/><polygon points="39.6,15.1 47.9,13.4 56.3,20.1 50.0,23.0 42.0,21.0" fill="#7c7e8a"/><polygon points="40.0,21.5 44.0,20.0 45.0,27.0 41.0,28.5" fill="#3c3c44"/><polyline points="55.0,22.0 80.0,22.5" fill="none" stroke="#88888e" stroke-width="1.2"/><ellipse cx="81.5" cy="22.5" rx="1.6" ry="1.6" fill="none" stroke="#70707a" stroke-width="0.7"/><polygon points="66.0,11.0 81.0,11.0 81.0,15.0 66.0,15.0" fill="#f4f0a0" stroke="#a09830" stroke-width="0.4"/></svg></div>
<div class="tl" style="left:15px;top:460px">12B</div>
<div class="thumb" style="left:117px;top:389px"><svg width="83" height="57" viewBox="1 1 83 57" style="display:block"><ellipse cx="29.5" cy="0.8" rx="6.0" ry="3.0" fill="none" stroke="#8a8a90" stroke-width="0.5"/><polygon points="8.5,24.3 13.6,22.6 19.4,58.0 13.6,58.0" fill="#eeeeee" stroke="#a8a8ac" stroke-width="0.5"/><polyline points="10.5,24.0 16.5,58.0" fill="none" stroke="#b8b8bc" stroke-width="0.5"/><polygon points="7.0,40.0 9.5,39.0 10.0,46.0 7.5,47.0" fill="#d8d8d8" stroke="#a0a0a4" stroke-width="0.4"/><polyline points="22.8,33.5 62.0,22.0 84.5,17.6" fill="none" stroke="#b4b4b8" stroke-width="0.6"/><polyline points="62.0,22.0 84.5,24.0" fill="none" stroke="#c4c4c8" stroke-width="0.5"/><polyline points="22.8,33.5 20.5,48.0 22.5,48.5 25.0,35.0" fill="none" stroke="#a8a8ac" stroke-width="0.6"/><polyline points="24.0,44.0 35.0,56.0 60.0,54.0 84.5,46.5" fill="none" stroke="#b4b4b8" stroke-width="0.6"/><polyline points="60.0,54.0 84.5,50.0" fill="none" stroke="#c4c4c8" stroke-width="0.5"/><polyline points="62.0,22.0 69.0,50.0" fill="none" stroke="#b0b0b4" stroke-width="0.6"/><polyline points="64.5,21.5 71.5,49.5" fill="none" stroke="#c0c0c4" stroke-width="0.5"/><ellipse cx="43.7" cy="49.0" rx="12.8" ry="5.5" fill="#c8c8c8" stroke="#9a9a9e" stroke-width="0.4"/><polygon points="30.3,37.0 57.2,37.0 56.5,49.0 31.0,49.0" fill="#d2d2d2"/><ellipse cx="43.7" cy="38.0" rx="13.6" ry="6.5" fill="#e0e0e0" stroke="#9a9a9e" stroke-width="0.4"/><ellipse cx="43.7" cy="31.0" rx="15.5" ry="9.0" fill="#ececec" stroke="#88888e" stroke-width="0.5"/><ellipse cx="43.7" cy="30.5" rx="12.5" ry="7.0" fill="#dadadc" stroke="#9a9aa0" stroke-width="0.4"/><ellipse cx="57.7" cy="31.0" rx="0.6" ry="0.6" fill="#70707a"/><ellipse cx="56.3" cy="34.5" rx="0.6" ry="0.6" fill="#70707a"/><ellipse cx="52.4" cy="37.3" rx="0.6" ry="0.6" fill="#70707a"/><ellipse cx="46.8" cy="38.8" rx="0.6" ry="0.6" fill="#70707a"/><ellipse cx="40.6" cy="38.8" rx="0.6" ry="0.6" fill="#70707a"/><ellipse cx="35.0" cy="37.3" rx="0.6" ry="0.6" fill="#70707a"/><ellipse cx="31.1" cy="34.5" rx="0.6" ry="0.6" fill="#70707a"/><ellipse cx="29.7" cy="31.0" rx="0.6" ry="0.6" fill="#70707a"/><ellipse cx="31.1" cy="27.5" rx="0.6" ry="0.6" fill="#70707a"/><ellipse cx="35.0" cy="24.7" rx="0.6" ry="0.6" fill="#70707a"/><ellipse cx="40.6" cy="23.2" rx="0.6" ry="0.6" fill="#70707a"/><ellipse cx="46.8" cy="23.2" rx="0.6" ry="0.6" fill="#70707a"/><ellipse cx="52.4" cy="24.7" rx="0.6" ry="0.6" fill="#70707a"/><ellipse cx="56.3" cy="27.5" rx="0.6" ry="0.6" fill="#70707a"/><polygon points="33.7,24.3 39.6,15.1 47.9,13.4 56.3,20.1 53.8,28.5 44.6,31.8 36.2,29.3" fill="#666874" stroke="#44454e" stroke-width="0.4"/><polygon points="39.6,15.1 47.9,13.4 56.3,20.1 50.0,23.0 42.0,21.0" fill="#7c7e8a"/><polygon points="40.0,21.5 44.0,20.0 45.0,27.0 41.0,28.5" fill="#3c3c44"/><polyline points="54.0,20.0 63.0,3.0 61.0,1.5" fill="none" stroke="#8a8a90" stroke-width="0.9"/><polyline points="63.0,3.0 66.0,2.5" fill="none" stroke="#8a8a90" stroke-width="0.9"/><path d="M52,26 A6,6 0 0 1 59,16" fill="none" stroke="#e03030" stroke-width="0.7"/></svg></div>
<div class="tl" style="left:119px;top:460px">12C</div>
<div class="thumb" style="left:13px;top:483px"><svg width="83" height="57" viewBox="1 1 83 57" style="display:block"><ellipse cx="29.5" cy="0.8" rx="6.0" ry="3.0" fill="none" stroke="#8a8a90" stroke-width="0.5"/><polygon points="8.5,24.3 13.6,22.6 19.4,58.0 13.6,58.0" fill="#eeeeee" stroke="#a8a8ac" stroke-width="0.5"/><polyline points="10.5,24.0 16.5,58.0" fill="none" stroke="#b8b8bc" stroke-width="0.5"/><polygon points="7.0,40.0 9.5,39.0 10.0,46.0 7.5,47.0" fill="#d8d8d8" stroke="#a0a0a4" stroke-width="0.4"/><polyline points="22.8,33.5 62.0,22.0 84.5,17.6" fill="none" stroke="#b4b4b8" stroke-width="0.6"/><polyline points="62.0,22.0 84.5,24.0" fill="none" stroke="#c4c4c8" stroke-width="0.5"/><polyline points="22.8,33.5 20.5,48.0 22.5,48.5 25.0,35.0" fill="none" stroke="#a8a8ac" stroke-width="0.6"/><polyline points="24.0,44.0 35.0,56.0 60.0,54.0 84.5,46.5" fill="none" stroke="#b4b4b8" stroke-width="0.6"/><polyline points="60.0,54.0 84.5,50.0" fill="none" stroke="#c4c4c8" stroke-width="0.5"/><polyline points="62.0,22.0 69.0,50.0" fill="none" stroke="#b0b0b4" stroke-width="0.6"/><polyline points="64.5,21.5 71.5,49.5" fill="none" stroke="#c0c0c4" stroke-width="0.5"/><ellipse cx="43.7" cy="49.0" rx="12.8" ry="5.5" fill="#c8c8c8" stroke="#9a9a9e" stroke-width="0.4"/><polygon points="30.3,37.0 57.2,37.0 56.5,49.0 31.0,49.0" fill="#d2d2d2"/><ellipse cx="43.7" cy="38.0" rx="13.6" ry="6.5" fill="#e0e0e0" stroke="#9a9a9e" stroke-width="0.4"/><ellipse cx="43.7" cy="31.0" rx="15.5" ry="9.0" fill="#ececec" stroke="#88888e" stroke-width="0.5"/><ellipse cx="43.7" cy="30.5" rx="12.5" ry="7.0" fill="#dadadc" stroke="#9a9aa0" stroke-width="0.4"/><ellipse cx="57.7" cy="31.0" rx="0.6" ry="0.6" fill="#70707a"/><ellipse cx="56.3" cy="34.5" rx="0.6" ry="0.6" fill="#70707a"/><ellipse cx="52.4" cy="37.3" rx="0.6" ry="0.6" fill="#70707a"/><ellipse cx="46.8" cy="38.8" rx="0.6" ry="0.6" fill="#70707a"/><ellipse cx="40.6" cy="38.8" rx="0.6" ry="0.6" fill="#70707a"/><ellipse cx="35.0" cy="37.3" rx="0.6" ry="0.6" fill="#70707a"/><ellipse cx="31.1" cy="34.5" rx="0.6" ry="0.6" fill="#70707a"/><ellipse cx="29.7" cy="31.0" rx="0.6" ry="0.6" fill="#70707a"/><ellipse cx="31.1" cy="27.5" rx="0.6" ry="0.6" fill="#70707a"/><ellipse cx="35.0" cy="24.7" rx="0.6" ry="0.6" fill="#70707a"/><ellipse cx="40.6" cy="23.2" rx="0.6" ry="0.6" fill="#70707a"/><ellipse cx="46.8" cy="23.2" rx="0.6" ry="0.6" fill="#70707a"/><ellipse cx="52.4" cy="24.7" rx="0.6" ry="0.6" fill="#70707a"/><ellipse cx="56.3" cy="27.5" rx="0.6" ry="0.6" fill="#70707a"/><polygon points="33.7,24.3 39.6,15.1 47.9,13.4 56.3,20.1 53.8,28.5 44.6,31.8 36.2,29.3" fill="#666874" stroke="#44454e" stroke-width="0.4"/><polygon points="39.6,15.1 47.9,13.4 56.3,20.1 50.0,23.0 42.0,21.0" fill="#7c7e8a"/><polygon points="40.0,21.5 44.0,20.0 45.0,27.0 41.0,28.5" fill="#3c3c44"/><polyline points="55.5,17.0 55.5,13.0" fill="none" stroke="#e04040" stroke-width="0.7"/></svg></div>
<div class="tl" style="left:15px;top:554px">12D</div>
<div class="thumb" style="left:117px;top:483px"><svg width="83" height="57" viewBox="1 1 83 57" style="display:block"><ellipse cx="29.5" cy="0.8" rx="6.0" ry="3.0" fill="none" stroke="#8a8a90" stroke-width="0.5"/><polygon points="8.5,24.3 13.6,22.6 19.4,58.0 13.6,58.0" fill="#eeeeee" stroke="#a8a8ac" stroke-width="0.5"/><polyline points="10.5,24.0 16.5,58.0" fill="none" stroke="#b8b8bc" stroke-width="0.5"/><polygon points="7.0,40.0 9.5,39.0 10.0,46.0 7.5,47.0" fill="#d8d8d8" stroke="#a0a0a4" stroke-width="0.4"/><polyline points="22.8,33.5 62.0,22.0 84.5,17.6" fill="none" stroke="#b4b4b8" stroke-width="0.6"/><polyline points="62.0,22.0 84.5,24.0" fill="none" stroke="#c4c4c8" stroke-width="0.5"/><polyline points="22.8,33.5 20.5,48.0 22.5,48.5 25.0,35.0" fill="none" stroke="#a8a8ac" stroke-width="0.6"/><polyline points="24.0,44.0 35.0,56.0 60.0,54.0 84.5,46.5" fill="none" stroke="#b4b4b8" stroke-width="0.6"/><polyline points="60.0,54.0 84.5,50.0" fill="none" stroke="#c4c4c8" stroke-width="0.5"/><polyline points="62.0,22.0 69.0,50.0" fill="none" stroke="#b0b0b4" stroke-width="0.6"/><polyline points="64.5,21.5 71.5,49.5" fill="none" stroke="#c0c0c4" stroke-width="0.5"/><ellipse cx="43.7" cy="49.0" rx="12.8" ry="5.5" fill="#c8c8c8" stroke="#9a9a9e" stroke-width="0.4"/><polygon points="30.3,37.0 57.2,37.0 56.5,49.0 31.0,49.0" fill="#d2d2d2"/><ellipse cx="43.7" cy="38.0" rx="13.6" ry="6.5" fill="#e0e0e0" stroke="#9a9a9e" stroke-width="0.4"/><ellipse cx="43.7" cy="31.0" rx="15.5" ry="9.0" fill="#ececec" stroke="#88888e" stroke-width="0.5"/><ellipse cx="43.7" cy="30.5" rx="12.5" ry="7.0" fill="#dadadc" stroke="#9a9aa0" stroke-width="0.4"/><ellipse cx="57.7" cy="31.0" rx="0.6" ry="0.6" fill="#70707a"/><ellipse cx="56.3" cy="34.5" rx="0.6" ry="0.6" fill="#70707a"/><ellipse cx="52.4" cy="37.3" rx="0.6" ry="0.6" fill="#70707a"/><ellipse cx="46.8" cy="38.8" rx="0.6" ry="0.6" fill="#70707a"/><ellipse cx="40.6" cy="38.8" rx="0.6" ry="0.6" fill="#70707a"/><ellipse cx="35.0" cy="37.3" rx="0.6" ry="0.6" fill="#70707a"/><ellipse cx="31.1" cy="34.5" rx="0.6" ry="0.6" fill="#70707a"/><ellipse cx="29.7" cy="31.0" rx="0.6" ry="0.6" fill="#70707a"/><ellipse cx="31.1" cy="27.5" rx="0.6" ry="0.6" fill="#70707a"/><ellipse cx="35.0" cy="24.7" rx="0.6" ry="0.6" fill="#70707a"/><ellipse cx="40.6" cy="23.2" rx="0.6" ry="0.6" fill="#70707a"/><ellipse cx="46.8" cy="23.2" rx="0.6" ry="0.6" fill="#70707a"/><ellipse cx="52.4" cy="24.7" rx="0.6" ry="0.6" fill="#70707a"/><ellipse cx="56.3" cy="27.5" rx="0.6" ry="0.6" fill="#70707a"/><polygon points="33.7,24.3 39.6,15.1 47.9,13.4 56.3,20.1 53.8,28.5 44.6,31.8 36.2,29.3" fill="#666874" stroke="#44454e" stroke-width="0.4"/><polygon points="39.6,15.1 47.9,13.4 56.3,20.1 50.0,23.0 42.0,21.0" fill="#7c7e8a"/><polygon points="40.0,21.5 44.0,20.0 45.0,27.0 41.0,28.5" fill="#3c3c44"/></svg></div>
<div class="tl" style="left:119px;top:554px">12E</div>
<div class="thumb" style="left:13px;top:577px"><svg width="83" height="57" viewBox="1 1 83 57" style="display:block"><ellipse cx="29.5" cy="0.8" rx="6.0" ry="3.0" fill="none" stroke="#8a8a90" stroke-width="0.5"/><polygon points="8.5,24.3 13.6,22.6 19.4,58.0 13.6,58.0" fill="#eeeeee" stroke="#a8a8ac" stroke-width="0.5"/><polyline points="10.5,24.0 16.5,58.0" fill="none" stroke="#b8b8bc" stroke-width="0.5"/><polygon points="7.0,40.0 9.5,39.0 10.0,46.0 7.5,47.0" fill="#d8d8d8" stroke="#a0a0a4" stroke-width="0.4"/><polyline points="22.8,33.5 62.0,22.0 84.5,17.6" fill="none" stroke="#b4b4b8" stroke-width="0.6"/><polyline points="62.0,22.0 84.5,24.0" fill="none" stroke="#c4c4c8" stroke-width="0.5"/><polyline points="22.8,33.5 20.5,48.0 22.5,48.5 25.0,35.0" fill="none" stroke="#a8a8ac" stroke-width="0.6"/><polyline points="24.0,44.0 35.0,56.0 60.0,54.0 84.5,46.5" fill="none" stroke="#b4b4b8" stroke-width="0.6"/><polyline points="60.0,54.0 84.5,50.0" fill="none" stroke="#c4c4c8" stroke-width="0.5"/><polyline points="62.0,22.0 69.0,50.0" fill="none" stroke="#b0b0b4" stroke-width="0.6"/><polyline points="64.5,21.5 71.5,49.5" fill="none" stroke="#c0c0c4" stroke-width="0.5"/><ellipse cx="43.7" cy="49.0" rx="12.8" ry="5.5" fill="#c8c8c8" stroke="#9a9a9e" stroke-width="0.4"/><polygon points="30.3,37.0 57.2,37.0 56.5,49.0 31.0,49.0" fill="#d2d2d2"/><ellipse cx="43.7" cy="38.0" rx="13.6" ry="6.5" fill="#e0e0e0" stroke="#9a9a9e" stroke-width="0.4"/><ellipse cx="43.7" cy="31.0" rx="15.5" ry="9.0" fill="#ececec" stroke="#88888e" stroke-width="0.5"/><ellipse cx="43.7" cy="30.5" rx="12.5" ry="7.0" fill="#dadadc" stroke="#9a9aa0" stroke-width="0.4"/><ellipse cx="57.7" cy="31.0" rx="0.6" ry="0.6" fill="#70707a"/><ellipse cx="56.3" cy="34.5" rx="0.6" ry="0.6" fill="#70707a"/><ellipse cx="52.4" cy="37.3" rx="0.6" ry="0.6" fill="#70707a"/><ellipse cx="46.8" cy="38.8" rx="0.6" ry="0.6" fill="#70707a"/><ellipse cx="40.6" cy="38.8" rx="0.6" ry="0.6" fill="#70707a"/><ellipse cx="35.0" cy="37.3" rx="0.6" ry="0.6" fill="#70707a"/><ellipse cx="31.1" cy="34.5" rx="0.6" ry="0.6" fill="#70707a"/><ellipse cx="29.7" cy="31.0" rx="0.6" ry="0.6" fill="#70707a"/><ellipse cx="31.1" cy="27.5" rx="0.6" ry="0.6" fill="#70707a"/><ellipse cx="35.0" cy="24.7" rx="0.6" ry="0.6" fill="#70707a"/><ellipse cx="40.6" cy="23.2" rx="0.6" ry="0.6" fill="#70707a"/><ellipse cx="46.8" cy="23.2" rx="0.6" ry="0.6" fill="#70707a"/><ellipse cx="52.4" cy="24.7" rx="0.6" ry="0.6" fill="#70707a"/><ellipse cx="56.3" cy="27.5" rx="0.6" ry="0.6" fill="#70707a"/><polygon points="33.7,24.3 39.6,15.1 47.9,13.4 56.3,20.1 53.8,28.5 44.6,31.8 36.2,29.3" fill="#666874" stroke="#44454e" stroke-width="0.4"/><polygon points="39.6,15.1 47.9,13.4 56.3,20.1 50.0,23.0 42.0,21.0" fill="#7c7e8a"/><polygon points="40.0,21.5 44.0,20.0 45.0,27.0 41.0,28.5" fill="#3c3c44"/></svg></div>
<div class="tl" style="left:15px;top:648px">12F</div>
<div class="thumb" style="left:117px;top:577px"><svg width="83" height="57" viewBox="1 1 83 57" style="display:block"><pattern id="tp13" width="2.0" height="2.0" patternUnits="userSpaceOnUse" patternTransform="rotate(-66)"><rect width="2.0" height="2.0" fill="#3e3e42"/><rect width="0.55" height="2.0" fill="#9c9ca2"/></pattern><pattern id="tg13" width="2.0" height="2.0" patternUnits="userSpaceOnUse" patternTransform="rotate(20)"><rect width="2.0" height="2.0" fill="#3e3e42"/><rect width="0.55" height="2.0" fill="#9c9ca2"/></pattern><polygon points="34.5,18.8 42.9,12.1 42.1,3.7 37.0,0.3 63.9,0.3 66.4,12.1 61.3,22.1 49.6,27.2" fill="url(#tg13)"/><polygon points="0.7,33.0 34.5,18.8 49.6,27.2 4.4,53.1 0.7,50.6" fill="url(#tp13)"/><polygon points="40.0,21.0 52.0,12.0 63.0,14.0 56.0,24.5 49.6,27.2" fill="url(#tp13)"/><path d="M4.4,54.5 L50,29 Q64,24 67.5,12 Q68.5,5 65.5,0.3" fill="none" stroke="#dcdce0" stroke-width="2.2"/><path d="M4.4,55.8 L50.5,30.2 Q65.5,25 69,12 Q70,5 67,0.3" fill="none" stroke="#8a8a92" stroke-width="0.5"/><path d="M0.7,32 L34,18 Q41,13 40.5,5 Q40,2 36,0.3" fill="none" stroke="#d8d8dc" stroke-width="1.4"/><polyline points="4.4,55.0 4.4,58.0" fill="none" stroke="#9a9aa0" stroke-width="0.6"/><polyline points="21.0,46.0 21.0,49.0" fill="none" stroke="#9a9aa0" stroke-width="0.6"/><polyline points="38.0,36.5 38.0,39.5" fill="none" stroke="#9a9aa0" stroke-width="0.6"/><polygon points="0.7,50.6 4.4,53.1 4.4,56.0 0.7,53.5" fill="#c8c8cc"/><polyline points="38.0,47.5 56.5,39.0 67.4,52.3 46.5,57.5 38.0,47.5" fill="none" stroke="#9c9ca2" stroke-width="0.6"/><polyline points="38.0,47.5 38.0,51.0" fill="none" stroke="#9c9ca2" stroke-width="0.6"/><polyline points="67.4,52.3 67.4,55.5" fill="none" stroke="#9c9ca2" stroke-width="0.6"/><ellipse cx="51.0" cy="46.0" rx="4.5" ry="2.2" fill="none" stroke="#a0a0a8" stroke-width="0.5" transform="rotate(-20 51 46)"/><ellipse cx="57.0" cy="52.0" rx="4.0" ry="2.0" fill="none" stroke="#a0a0a8" stroke-width="0.5" transform="rotate(-20 57 52)"/><ellipse cx="34.5" cy="27.4" rx="5.8" ry="3.2" fill="#c80808"/><polygon points="30.2,20.5 38.8,20.5 38.8,27.4 30.2,27.4" fill="#b40000"/><ellipse cx="34.5" cy="20.5" rx="5.8" ry="3.5" fill="#d81010"/><ellipse cx="34.5" cy="20.5" rx="3.5" ry="2.0" fill="#9a0000"/><ellipse cx="46.0" cy="46.0" rx="2.6" ry="2.4" fill="#c8c8cc" stroke="#8a8a90" stroke-width="0.4"/><polyline points="43.0,22.0 45.5,24.5" fill="none" stroke="#9898a0" stroke-width="0.8"/></svg></div>
<div class="tl" style="left:119px;top:648px">12G</div>
<div class="thumb" style="left:13px;top:671px"><svg width="83" height="57" viewBox="1 1 83 57" style="display:block"><pattern id="tp14" width="2.0" height="2.0" patternUnits="userSpaceOnUse" patternTransform="rotate(-66)"><rect width="2.0" height="2.0" fill="#3e3e42"/><rect width="0.55" height="2.0" fill="#9c9ca2"/></pattern><pattern id="tg14" width="2.0" height="2.0" patternUnits="userSpaceOnUse" patternTransform="rotate(20)"><rect width="2.0" height="2.0" fill="#3e3e42"/><rect width="0.55" height="2.0" fill="#9c9ca2"/></pattern><polygon points="34.5,18.8 42.9,12.1 42.1,3.7 37.0,0.3 63.9,0.3 66.4,12.1 61.3,22.1 49.6,27.2" fill="url(#tg14)"/><polygon points="0.7,33.0 34.5,18.8 49.6,27.2 4.4,53.1 0.7,50.6" fill="url(#tp14)"/><polygon points="40.0,21.0 52.0,12.0 63.0,14.0 56.0,24.5 49.6,27.2" fill="url(#tp14)"/><path d="M4.4,54.5 L50,29 Q64,24 67.5,12 Q68.5,5 65.5,0.3" fill="none" stroke="#dcdce0" stroke-width="2.2"/><path d="M4.4,55.8 L50.5,30.2 Q65.5,25 69,12 Q70,5 67,0.3" fill="none" stroke="#8a8a92" stroke-width="0.5"/><path d="M0.7,32 L34,18 Q41,13 40.5,5 Q40,2 36,0.3" fill="none" stroke="#d8d8dc" stroke-width="1.4"/><polyline points="4.4,55.0 4.4,58.0" fill="none" stroke="#9a9aa0" stroke-width="0.6"/><polyline points="21.0,46.0 21.0,49.0" fill="none" stroke="#9a9aa0" stroke-width="0.6"/><polyline points="38.0,36.5 38.0,39.5" fill="none" stroke="#9a9aa0" stroke-width="0.6"/><polygon points="0.7,50.6 4.4,53.1 4.4,56.0 0.7,53.5" fill="#c8c8cc"/><polyline points="38.0,47.5 56.5,39.0 67.4,52.3 46.5,57.5 38.0,47.5" fill="none" stroke="#9c9ca2" stroke-width="0.6"/><polyline points="38.0,47.5 38.0,51.0" fill="none" stroke="#9c9ca2" stroke-width="0.6"/><polyline points="67.4,52.3 67.4,55.5" fill="none" stroke="#9c9ca2" stroke-width="0.6"/><ellipse cx="51.0" cy="46.0" rx="4.5" ry="2.2" fill="none" stroke="#a0a0a8" stroke-width="0.5" transform="rotate(-20 51 46)"/><ellipse cx="57.0" cy="52.0" rx="4.0" ry="2.0" fill="none" stroke="#a0a0a8" stroke-width="0.5" transform="rotate(-20 57 52)"/><ellipse cx="34.9" cy="31.1" rx="6.0" ry="3.4" fill="#c80808"/><polygon points="30.5,24.0 39.3,24.0 39.3,31.1 30.5,31.1" fill="#b40000"/><ellipse cx="34.9" cy="24.0" rx="6.0" ry="3.6" fill="#d81010"/><ellipse cx="34.9" cy="24.0" rx="3.6" ry="2.1" fill="#9a0000"/><ellipse cx="34.0" cy="10.0" rx="2.8" ry="3.2" fill="#c8c8cc" stroke="#8e8e96" stroke-width="0.4"/><ellipse cx="34.0" cy="9.0" rx="1.8" ry="1.4" fill="#e0e0e4" stroke="#8e8e96" stroke-width="0.3"/><polyline points="43.0,22.0 45.5,24.5" fill="none" stroke="#9898a0" stroke-width="0.8"/></svg></div>
<div class="tl" style="left:15px;top:742px">13A</div>
<div class="thumb" style="left:117px;top:671px"><svg width="83" height="57" viewBox="1 1 83 57" style="display:block"><pattern id="tp15" width="2.0" height="2.0" patternUnits="userSpaceOnUse" patternTransform="rotate(-66)"><rect width="2.0" height="2.0" fill="#3e3e42"/><rect width="0.55" height="2.0" fill="#9c9ca2"/></pattern><pattern id="tg15" width="2.0" height="2.0" patternUnits="userSpaceOnUse" patternTransform="rotate(20)"><rect width="2.0" height="2.0" fill="#3e3e42"/><rect width="0.55" height="2.0" fill="#9c9ca2"/></pattern><polygon points="34.5,18.8 42.9,12.1 42.1,3.7 37.0,0.3 63.9,0.3 66.4,12.1 61.3,22.1 49.6,27.2" fill="url(#tg15)"/><polygon points="0.7,33.0 34.5,18.8 49.6,27.2 4.4,53.1 0.7,50.6" fill="url(#tp15)"/><polygon points="40.0,21.0 52.0,12.0 63.0,14.0 56.0,24.5 49.6,27.2" fill="url(#tp15)"/><path d="M4.4,54.5 L50,29 Q64,24 67.5,12 Q68.5,5 65.5,0.3" fill="none" stroke="#dcdce0" stroke-width="2.2"/><path d="M4.4,55.8 L50.5,30.2 Q65.5,25 69,12 Q70,5 67,0.3" fill="none" stroke="#8a8a92" stroke-width="0.5"/><path d="M0.7,32 L34,18 Q41,13 40.5,5 Q40,2 36,0.3" fill="none" stroke="#d8d8dc" stroke-width="1.4"/><polyline points="4.4,55.0 4.4,58.0" fill="none" stroke="#9a9aa0" stroke-width="0.6"/><polyline points="21.0,46.0 21.0,49.0" fill="none" stroke="#9a9aa0" stroke-width="0.6"/><polyline points="38.0,36.5 38.0,39.5" fill="none" stroke="#9a9aa0" stroke-width="0.6"/><polygon points="0.7,50.6 4.4,53.1 4.4,56.0 0.7,53.5" fill="#c8c8cc"/><polyline points="38.0,47.5 56.5,39.0 67.4,52.3 46.5,57.5 38.0,47.5" fill="none" stroke="#9c9ca2" stroke-width="0.6"/><polyline points="38.0,47.5 38.0,51.0" fill="none" stroke="#9c9ca2" stroke-width="0.6"/><polyline points="67.4,52.3 67.4,55.5" fill="none" stroke="#9c9ca2" stroke-width="0.6"/><ellipse cx="51.0" cy="46.0" rx="4.5" ry="2.2" fill="none" stroke="#a0a0a8" stroke-width="0.5" transform="rotate(-20 51 46)"/><ellipse cx="57.0" cy="52.0" rx="4.0" ry="2.0" fill="none" stroke="#a0a0a8" stroke-width="0.5" transform="rotate(-20 57 52)"/><ellipse cx="34.5" cy="27.6" rx="6.0" ry="3.4" fill="#c80808"/><polygon points="30.1,20.5 38.9,20.5 38.9,27.6 30.1,27.6" fill="#b40000"/><ellipse cx="34.5" cy="20.5" rx="6.0" ry="3.6" fill="#d81010"/><ellipse cx="34.5" cy="20.5" rx="3.6" ry="2.1" fill="#9a0000"/><ellipse cx="34.5" cy="20.0" rx="3.0" ry="2.0" fill="#d0d0d4" stroke="#9a9aa0" stroke-width="0.3"/><polyline points="43.0,22.0 45.5,24.5" fill="none" stroke="#9898a0" stroke-width="0.8"/></svg></div>
<div class="tl" style="left:119px;top:742px">13B</div>
<div class="thumb" style="left:13px;top:765px"><svg width="83" height="57" viewBox="1 1 83 57" style="display:block"><polyline points="7.2,18.6 26.7,18.6" fill="none" stroke="#6a6a70" stroke-width="1.1" stroke-dasharray="1.2 0.5"/><polyline points="7.2,21.2 24.2,21.2" fill="none" stroke="#6a6a70" stroke-width="1.1" stroke-dasharray="1.2 0.5"/><polyline points="7.2,23.8 23.2,23.8" fill="none" stroke="#6a6a70" stroke-width="1.1" stroke-dasharray="1.2 0.5"/><polyline points="7.2,26.4 26.2,26.4" fill="none" stroke="#6a6a70" stroke-width="1.1" stroke-dasharray="1.2 0.5"/><polyline points="7.2,29.0 11.2,29.0" fill="none" stroke="#6a6a70" stroke-width="1.1" stroke-dasharray="1.2 0.5"/><polygon points="26.5,26.0 28.0,30.0 41.5,34.5" fill="#8c8c90"/><polygon points="42.0,19.7 49.6,19.7 48.9,37.4 42.7,37.4" fill="#8a8a8e"/><polygon points="44.0,19.7 46.5,19.7 46.2,37.4 44.4,37.4" fill="#b4b4b8"/><ellipse cx="45.8" cy="37.4" rx="3.1" ry="1.3" fill="#7a7a7e"/><polygon points="40.0,15.6 51.8,15.6 51.2,21.0 40.6,21.0" fill="#9a9a9e"/><ellipse cx="45.9" cy="21.0" rx="5.3" ry="1.8" fill="#8a8a8e"/><ellipse cx="45.9" cy="15.6" rx="5.9" ry="3.4" fill="#c8c8cc" stroke="#80808a" stroke-width="0.4"/><ellipse cx="45.9" cy="15.6" rx="3.4" ry="1.9" fill="#f0f0f0" stroke="#80808a" stroke-width="0.4"/><ellipse cx="45.8" cy="36.0" rx="5.5" ry="4.2" fill="none" stroke="#e04040" stroke-width="0.5"/></svg></div>
<div class="tl" style="left:15px;top:836px">13C</div>
<div class="thumb" style="left:117px;top:765px"><svg width="83" height="57" viewBox="1 1 83 57" style="display:block"><pattern id="tp17" width="4.4" height="4.4" patternUnits="userSpaceOnUse" patternTransform="rotate(-74)"><rect width="4.4" height="4.4" fill="#343436"/><rect width="1.3" height="4.4" fill="#77777c"/></pattern><polygon points="0.7,46.3 36.2,38.8 59.4,32.0 70.3,18.3 57.4,0.5 84.5,0.5 84.5,58.0 0.7,58.0" fill="url(#tp17)"/><polygon points="62.0,38.0 84.5,50.0 84.5,53.0" fill="#f4f4f4"/><polygon points="66.0,33.0 84.5,41.0 84.5,43.5" fill="#f4f4f4"/><polygon points="58.0,42.0 78.0,58.0 73.5,58.0" fill="#f4f4f4"/><path d="M0.7,46.3 L36.2,38.8 Q55,35 62,30 Q72,22 68,12 Q64,5 57.4,0.5" fill="none" stroke="#f0f0f2" stroke-width="2.2"/><path d="M0.7,48 L36.5,40.4 Q56,36.5 63.3,31.2 Q74,22 69.7,11.5 Q66,4 59.5,0.5" fill="none" stroke="#8e8e96" stroke-width="0.5"/><polyline points="57.5,9.0 58.5,12.0" fill="none" stroke="#55555a" stroke-width="0.8"/><ellipse cx="45.6" cy="55.0" rx="11.5" ry="6.0" fill="#c80808"/><polygon points="36.5,40.0 55.0,40.0 53.5,55.0 37.5,55.0" fill="#b40000"/><ellipse cx="45.8" cy="37.4" rx="11.0" ry="8.0" fill="#d40c0c"/><ellipse cx="45.8" cy="37.4" rx="7.2" ry="5.4" fill="#d8d8dc" stroke="#a04040" stroke-width="0.4"/><polyline points="42.0,35.0 49.0,40.0" fill="none" stroke="#a8a8b0" stroke-width="0.6"/><polyline points="49.0,34.5 43.0,40.0" fill="none" stroke="#a8a8b0" stroke-width="0.6"/><ellipse cx="66.2" cy="42.2" rx="3.2" ry="4.0" fill="#8a8c9c" stroke="#5a5c6c" stroke-width="0.4"/><ellipse cx="67.8" cy="43.0" rx="1.8" ry="3.2" fill="#5c5e70"/></svg></div>
<div class="tl" style="left:119px;top:836px">13D</div>
<div class="thumb" style="left:13px;top:859px"><svg width="83" height="57" viewBox="1 1 83 57" style="display:block"><pattern id="tp18" width="4.4" height="4.4" patternUnits="userSpaceOnUse" patternTransform="rotate(-72)"><rect width="4.4" height="4.4" fill="#343436"/><rect width="1.3" height="4.4" fill="#77777c"/></pattern><polygon points="57.0,0.3 84.5,0.3 84.5,58.0 69.4,58.0 70.7,19.4 63.9,12.6" fill="url(#tp18)"/><path d="M57,0.3 L63.5,12 Q70.5,20 69.5,31" fill="none" stroke="#f0f0f2" stroke-width="2"/><path d="M58.8,0.3 L65,11.4 Q72,19.6 71,31" fill="none" stroke="#8e8e96" stroke-width="0.5"/><polygon points="29.0,3.7 40.0,3.7 40.0,7.0 29.0,7.0" fill="#f4f0a0" stroke="#a09830" stroke-width="0.4"/><polyline points="31.0,5.4 38.0,5.4" fill="none" stroke="#807820" stroke-width="0.6"/><polygon points="25.7,17.0 40.7,17.0 40.7,20.8 25.7,20.8" fill="#f4f0a0" stroke="#a09830" stroke-width="0.4"/><polyline points="27.5,18.9 39.0,18.9" fill="none" stroke="#807820" stroke-width="0.6"/><ellipse cx="47.0" cy="10.5" rx="2.4" ry="2.8" fill="#d08a20"/><polygon points="46.0,12.5 48.5,12.5 48.2,16.0 46.4,16.0" fill="#4a4a50"/><polyline points="49.0,11.5 54.0,12.0" fill="none" stroke="#33333a" stroke-width="1"/><polyline points="58.0,11.0 59.5,12.5" fill="none" stroke="#33333a" stroke-width="0.8"/><polyline points="47.0,22.0 47.0,24.5" fill="none" stroke="#33333a" stroke-width="0.7"/><ellipse cx="45.6" cy="32.0" rx="4.4" ry="3.0" fill="#c80808"/></svg></div>
<div class="thumb" style="left:117px;top:859px"><svg width="83" height="57" viewBox="1 1 83 57" style="display:block"><pattern id="tp19" width="4.4" height="4.4" patternUnits="userSpaceOnUse" patternTransform="rotate(-72)"><rect width="4.4" height="4.4" fill="#343436"/><rect width="1.3" height="4.4" fill="#77777c"/></pattern><polygon points="57.4,0.3 84.5,0.3 84.5,58.0 69.0,58.0 70.3,19.4 64.9,12.6" fill="url(#tp19)"/><path d="M57.4,0.3 L64.5,12 Q70.3,20 69.2,31" fill="none" stroke="#f0f0f2" stroke-width="2"/><path d="M59.2,0.3 L66,11.4 Q72,19.6 70.8,31" fill="none" stroke="#8e8e96" stroke-width="0.5"/><ellipse cx="17.0" cy="20.8" rx="14.0" ry="14.0" fill="#e4e4e6" stroke="#8a8a92" stroke-width="0.6"/><polyline points="6.0,24.0 14.0,22.0 14.0,31.0" fill="none" stroke="#a4a4ac" stroke-width="0.5"/><polyline points="20.0,22.0 29.0,19.0" fill="none" stroke="#a4a4ac" stroke-width="0.5"/><polygon points="12.3,8.8 23.2,8.8 22.6,14.5 12.9,14.5" fill="#d88a18"/><ellipse cx="17.7" cy="8.8" rx="5.5" ry="1.8" fill="#f0a830"/><polygon points="13.0,14.2 22.4,14.2 21.6,19.0 13.8,19.0" fill="#4a4a52"/><polygon points="16.2,19.0 19.2,19.0 18.8,30.0 16.6,30.0" fill="#8a8a92"/><polyline points="57.5,9.0 58.5,12.0" fill="none" stroke="#55555a" stroke-width="0.8"/><ellipse cx="45.6" cy="32.0" rx="4.4" ry="3.0" fill="#c80808"/></svg></div>
</div>
<div class="abs" style="left:221px;top:104px;width:17px;height:887px;background:#f0f0f0"></div>
<div class="abs" style="left:221px;top:121px;width:15px;height:201px;background:#cdcdcd"></div>
<svg class="abs" style="left:221px;top:104px" width="17" height="17" viewBox="0 0 17 17"><path d="M4.5,10 L8.2,6.3 L11.9,10" fill="none" stroke="#505050" stroke-width="1.8"/></svg>
<svg class="abs" style="left:221px;top:974px" width="17" height="17" viewBox="0 0 17 17"><path d="M4.5,6.5 L8.2,10.2 L11.9,6.5" fill="none" stroke="#505050" stroke-width="1.8"/></svg>
<!--BOTTOM PANEL-->
<div id="bp" class="abs"></div>
<div id="bpbar" class="abs"><span style="position:absolute;left:3px;top:3px;font-size:12px;line-height:16px">标记</span></div>
<div class="film" style="left:253px"><b class="t"></b><b class="b"></b><i><svg width="85" height="40" viewBox="0 0 85 40" style="display:block"><pattern id="fp0" width="1.4" height="1.4" patternUnits="userSpaceOnUse" patternTransform="rotate(-60)"><rect width="1.4" height="1.4" fill="#4a4a4e"/><rect width="0.4" height="1.4" fill="#77777c"/></pattern><polygon points="19.5,19.0 43.9,8.1 50.6,10.8 50.6,12.4 24.9,24.6 19.5,20.6" fill="#d8d8dc" stroke="#a0a0a8" stroke-width="0.3"/><polygon points="24.4,18.6 42.5,10.4 47.0,12.0 28.5,20.6" fill="#26262a"/><polygon points="28.5,14.5 30.4,6.0 32.3,4.2 33.3,7.0 35.0,5.2 37.0,8.0 37.5,13.5 33.0,16.4" fill="#d40808"/><polygon points="37.1,27.0 49.3,19.0 49.3,14.4 54.7,13.5 60.0,17.6 58.8,23.0 42.5,30.6" fill="url(#fp0)" stroke="#9c9ca4" stroke-width="0.4"/><polygon points="54.7,25.7 58.0,24.0 64.2,28.4 60.0,30.6" fill="#d4d4d8" stroke="#8c8c94" stroke-width="0.4"/><polyline points="37.1,27.0 37.1,28.6" fill="none" stroke="#888" stroke-width="0.4"/><polyline points="42.5,30.6 42.5,32.2" fill="none" stroke="#888" stroke-width="0.4"/><polyline points="50.0,27.0 50.0,28.6" fill="none" stroke="#888" stroke-width="0.4"/></svg></i></div>
<div class="fl" style="left:255px">step0</div>
<div class="film" style="left:357px"><b class="t"></b><b class="b"></b><i><svg width="85" height="40" viewBox="0 0 85 40" style="display:block"><pattern id="fp1" width="4.2" height="4.2" patternUnits="userSpaceOnUse" patternTransform="rotate(-52)"><rect width="4.2" height="4.2" fill="#38383a"/><rect width="1.0" height="4.2" fill="#8a8a90"/></pattern><polygon points="4.3,40.0 30.0,20.0 54.4,0.0 85.0,0.0 85.0,40.0" fill="url(#fp1)"/><polygon points="62.0,20.0 85.0,24.0 85.0,26.0" fill="#eeeef2"/><polygon points="60.0,26.0 85.0,33.0 85.0,35.5" fill="#eeeef2"/><polygon points="58.0,32.0 76.0,40.0 72.0,40.0" fill="#eeeef2"/><polygon points="64.0,13.0 85.0,14.0 85.0,15.5" fill="#eeeef2"/><polyline points="3.0,40.0 29.0,20.0 53.0,0.0" fill="none" stroke="#e4e4e8" stroke-width="2.6"/><polyline points="0.5,40.0 27.5,19.0 50.5,0.0" fill="none" stroke="#b4b4bc" stroke-width="0.6"/><polygon points="78.8,40.0 85.0,28.0 85.0,40.0" fill="#e0e0e4"/><ellipse cx="48.5" cy="32.5" rx="11.0" ry="6.5" fill="#d40808"/><polygon points="40.5,17.0 57.5,17.0 56.5,32.0 41.5,32.0" fill="#c00000"/><ellipse cx="49.0" cy="16.0" rx="12.0" ry="8.0" fill="#e01010"/><ellipse cx="49.0" cy="16.0" rx="7.5" ry="5.0" fill="#a80000"/><ellipse cx="49.0" cy="17.0" rx="6.0" ry="3.6" fill="#c40808"/><polyline points="54.0,11.0 54.0,19.0" fill="none" stroke="#b8a098" stroke-width="0.7"/><polyline points="18.0,6.5 33.0,6.5" fill="none" stroke="#33343c" stroke-width="0.7" stroke-dasharray="2 0.6"/></svg></i></div>
<div class="fl" style="left:359px">step1.1</div>
<div class="film" style="left:461px"><b class="t"></b><b class="b"></b><i><svg width="85" height="40" viewBox="0 0 85 40" style="display:block"><pattern id="fp2" width="1.6" height="1.6" patternUnits="userSpaceOnUse" patternTransform="rotate(-65)"><rect width="1.6" height="1.6" fill="#47474b"/><rect width="0.45" height="1.6" fill="#9a9aa0"/></pattern><pattern id="fq2" width="1.6" height="1.6" patternUnits="userSpaceOnUse" patternTransform="rotate(10)"><rect width="1.6" height="1.6" fill="#47474b"/><rect width="0.45" height="1.6" fill="#9a9aa0"/></pattern><path d="M0,1.5 L38,1.5 Q56,3 57,10 Q57,16 52,19 L38.5,12.2 Q44,9 41,6 L0,5.5Z" fill="url(#fq2)"/><polygon points="9.5,25.7 38.5,12.2 52.0,19.0 18.1,35.2" fill="url(#fp2)"/><path d="M0,0.8 L38,0.8 Q58,2 59,10 Q59,17 52.5,20.2 L18.5,36.4" fill="none" stroke="#d8d8dc" stroke-width="1.3"/><path d="M9,25 L37.5,11.5 Q42,9 40,6.6 L0,6.2" fill="none" stroke="#d0d0d4" stroke-width="1"/><polyline points="9.5,26.0 9.5,28.0" fill="none" stroke="#8c8c94" stroke-width="0.5"/><polyline points="18.1,36.0 18.1,38.0" fill="none" stroke="#8c8c94" stroke-width="0.5"/><polyline points="30.0,30.5 30.0,32.5" fill="none" stroke="#8c8c94" stroke-width="0.5"/><ellipse cx="37.1" cy="18.4" rx="3.7" ry="2.1" fill="#d40808"/><polygon points="34.4,14.0 39.8,14.0 39.8,18.4 34.4,18.4" fill="#b80000"/><ellipse cx="37.1" cy="14.0" rx="3.7" ry="2.2" fill="#e01010"/><ellipse cx="37.1" cy="14.0" rx="2.2" ry="1.4" fill="#a00000"/><polygon points="39.8,33.3 52.0,27.0 60.1,33.9 46.6,39.3" fill="#e0e0e4" stroke="#9c9ca4" stroke-width="0.4"/><ellipse cx="48.5" cy="31.5" rx="2.4" ry="1.8" fill="#c8c8cc" stroke="#8a8a92" stroke-width="0.3"/></svg></i></div>
<div class="fl" style="left:463px">step1.2</div>
<div class="film" style="left:565px"><b class="t"></b><b class="b"></b><i><svg width="85" height="40" viewBox="0 0 85 40" style="display:block"><pattern id="fp3" width="2.2" height="2.2" patternUnits="userSpaceOnUse" patternTransform="rotate(-76)"><rect width="2.2" height="2.2" fill="#3a3a3e"/><rect width="0.6" height="2.2" fill="#86868c"/></pattern><polygon points="0.0,33.9 30.0,28.0 52.0,22.0 60.0,14.0 57.7,0.0 85.0,0.0 85.0,40.0 0.0,40.0" fill="url(#fp3)"/><polygon points="58.0,27.0 85.0,35.0 85.0,37.5" fill="#ececf0"/><polygon points="60.0,22.0 85.0,27.0 85.0,29.0" fill="#ececf0"/><polygon points="54.0,30.0 72.0,40.0 68.0,40.0" fill="#ececf0"/><path d="M0,33.4 L30,27.4 Q50,23.5 58,17 Q64,11 57.7,0" fill="none" stroke="#e8e8ec" stroke-width="1.8"/><path d="M80,40 Q85,32 85,25.7" fill="none" stroke="#e0e0e4" stroke-width="2"/><ellipse cx="44.0" cy="36.0" rx="9.0" ry="4.5" fill="#d40808"/><polygon points="37.0,22.0 51.0,22.0 50.0,36.0 38.0,36.0" fill="#bc0000"/><ellipse cx="44.0" cy="21.7" rx="9.0" ry="5.2" fill="#e01010"/><ellipse cx="44.0" cy="21.7" rx="5.6" ry="3.2" fill="#d0d0d4" stroke="#a05050" stroke-width="0.3"/><ellipse cx="61.8" cy="25.2" rx="2.6" ry="3.4" fill="#8a8c9c" stroke="#5a5c6c" stroke-width="0.4"/><ellipse cx="63.0" cy="25.8" rx="1.4" ry="2.4" fill="#5c5e70"/><ellipse cx="52.0" cy="1.0" rx="1.0" ry="1.0" fill="#e0e0e4"/></svg></i></div>
<div class="fl" style="left:567px">step1.3</div>
<div class="film" style="left:669px"><b class="t"></b><b class="b"></b><i><svg width="85" height="40" viewBox="0 0 85 40" style="display:block"><polygon points="0.0,32.0 10.0,31.0 79.0,23.5 85.0,26.0 85.0,36.0 0.0,40.0" fill="#e8e8ec"/><polygon points="0.0,33.0 10.6,33.9 21.4,38.0 0.0,40.0" fill="#8c8c94"/><polygon points="10.6,33.9 74.2,23.0 81.0,25.7 21.4,37.9" fill="#18181c"/><polygon points="76.0,24.0 85.0,23.0 85.0,36.0 80.0,36.0 81.0,26.0" fill="#c8c8d0"/><polygon points="34.9,25.7 41.7,6.8 45.8,10.8 49.8,9.5 53.9,23.0 52.5,31.1 43.0,34.4 36.3,31.1" fill="#d40808"/><polyline points="41.7,6.8 45.0,25.0 43.0,34.0" fill="none" stroke="#8a0000" stroke-width="0.5"/><polyline points="45.8,10.8 49.0,27.0" fill="none" stroke="#8a0000" stroke-width="0.5"/><ellipse cx="47.5" cy="27.0" rx="2.0" ry="1.4" fill="#a00000"/></svg></i></div>
<div class="fl" style="left:671px">step2.1</div>
<div class="film" style="left:773px"><b class="t"></b><b class="b"></b><i><svg width="85" height="40" viewBox="0 0 85 40" style="display:block"><polygon points="0.0,34.0 58.0,27.5 85.0,30.0 85.0,40.0 0.0,40.0" fill="#e4e4e8"/><polygon points="0.0,33.9 58.2,27.9 85.0,29.8 85.0,32.5 0.0,38.0" fill="#1c1c20"/><polygon points="55.5,27.0 71.8,25.7 85.0,28.4 85.0,40.0 66.0,40.0 70.0,31.0" fill="#ececf0" stroke="#a8a8b0" stroke-width="0.3"/><polygon points="17.6,25.7 28.4,4.1 33.9,5.4 36.6,4.1 42.0,6.8 46.0,29.8 42.0,33.9 23.0,33.9" fill="#d40808"/><polyline points="28.4,4.1 34.0,22.0" fill="none" stroke="#900000" stroke-width="0.5"/><polyline points="33.9,5.4 39.0,15.0" fill="none" stroke="#900000" stroke-width="0.5"/><ellipse cx="36.6" cy="23.8" rx="3.0" ry="5.0" fill="#f0f0f0" stroke="#a04040" stroke-width="0.4"/></svg></i></div>
<div class="fl" style="left:775px">step2.2</div>
<div class="film" style="left:877px"><b class="t"></b><b class="b"></b><i><svg width="85" height="40" viewBox="0 0 85 40" style="display:block"><polygon points="0.0,29.8 85.0,28.4 85.0,40.0 0.0,40.0" fill="#f0f0f4"/><polygon points="0.0,29.8 85.0,28.4 85.0,30.5 0.0,32.0" fill="#d0d0d8"/><polygon points="20.0,32.0 85.0,31.0 85.0,33.0 20.0,36.0" fill="#dcdce4"/><polygon points="42.3,25.7 49.0,0.0 62.6,0.0 68.0,5.4 76.1,24.4 73.4,32.5 43.6,32.5" fill="#d40808"/><polyline points="57.0,0.0 67.0,20.0 72.0,31.0" fill="none" stroke="#8a0000" stroke-width="0.5"/><polyline points="60.0,0.0 70.0,18.0" fill="none" stroke="#8a0000" stroke-width="0.5"/><polyline points="62.6,0.0 73.0,22.0" fill="none" stroke="#a00000" stroke-width="0.5"/><ellipse cx="52.5" cy="20.3" rx="2.4" ry="2.6" fill="none" stroke="#f0c020" stroke-width="1"/></svg></i></div>
<div class="fl" style="left:879px">step2.3</div>
<div class="film" style="left:981px;background:#f3f3f3;outline:1px solid #9a9a9a;outline-offset:-1px"><b class="t" style="background:repeating-linear-gradient(90deg,#fff 0,#fff 6px,#ececec 6px,#ececec 9px)"></b><b class="b" style="background:repeating-linear-gradient(90deg,#fff 0,#fff 6px,#ececec 6px,#ececec 9px)"></b><i><svg width="85" height="40" viewBox="0 0 85 40" style="display:block"><polygon points="0.0,0.0 52.0,0.0 56.9,20.3 56.9,40.0 0.0,40.0" fill="#e00808"/><polyline points="8.0,0.0 0.0,14.0" fill="none" stroke="#700000" stroke-width="0.6"/><polyline points="14.0,0.0 2.0,22.0 6.0,40.0" fill="none" stroke="#700000" stroke-width="0.6"/><polyline points="24.0,0.0 20.0,6.0" fill="none" stroke="#700000" stroke-width="0.5"/><polygon points="26.0,5.0 44.0,6.0 56.0,19.0 45.0,31.0 34.0,40.0 28.0,40.0 22.0,30.0" fill="#c40000" stroke="#700000" stroke-width="0.5"/><ellipse cx="35.8" cy="19.0" rx="10.2" ry="10.8" fill="#f4f4f4" stroke="#8a2020" stroke-width="0.5"/><ellipse cx="47.4" cy="19.0" rx="0.7" ry="0.7" fill="#f4f4f4"/><ellipse cx="45.8" cy="25.1" rx="0.7" ry="0.7" fill="#f4f4f4"/><ellipse cx="41.6" cy="29.6" rx="0.7" ry="0.7" fill="#f4f4f4"/><ellipse cx="35.8" cy="31.2" rx="0.7" ry="0.7" fill="#f4f4f4"/><ellipse cx="30.0" cy="29.6" rx="0.7" ry="0.7" fill="#f4f4f4"/><ellipse cx="25.8" cy="25.1" rx="0.7" ry="0.7" fill="#f4f4f4"/><ellipse cx="24.2" cy="19.0" rx="0.7" ry="0.7" fill="#f4f4f4"/><ellipse cx="25.8" cy="12.9" rx="0.7" ry="0.7" fill="#f4f4f4"/><ellipse cx="30.0" cy="8.4" rx="0.7" ry="0.7" fill="#f4f4f4"/><ellipse cx="35.8" cy="6.8" rx="0.7" ry="0.7" fill="#f4f4f4"/><ellipse cx="41.6" cy="8.4" rx="0.7" ry="0.7" fill="#f4f4f4"/><ellipse cx="45.8" cy="12.9" rx="0.7" ry="0.7" fill="#f4f4f4"/><ellipse cx="33.9" cy="19.5" rx="5.6" ry="6.0" fill="#7a7c8c" stroke="#50525e" stroke-width="0.4"/><polygon points="34.0,19.0 41.0,24.0 39.5,26.5 32.5,22.0" fill="#5e6070"/><ellipse cx="33.0" cy="18.5" rx="2.2" ry="2.4" fill="#9a9cac"/></svg></i></div>
<div class="abs" style="left:1004px;top:970px;width:47px;height:18px;background:#efefef"></div>
<div class="fl" style="left:983px">step3.1</div>
<div class="film" style="left:1085px"><b class="t"></b><b class="b"></b><i><svg width="85" height="40" viewBox="0 0 85 40" style="display:block"><polygon points="0.0,28.0 30.0,26.5 44.0,31.0 85.0,37.0 85.0,40.0 0.0,40.0" fill="#e8e8ec"/><polygon points="14.0,29.0 30.0,27.4 85.0,36.0 85.0,40.0 60.0,40.0" fill="#141418"/><polygon points="0.0,31.0 44.0,33.0 44.0,40.0 0.0,40.0" fill="#f0f0f4" stroke="#b0b0b8" stroke-width="0.3"/><polygon points="44.1,31.1 57.7,1.4 61.8,5.4 65.8,4.1 71.2,0.0 75.3,1.4 79.4,25.7 75.3,36.6 46.9,35.2" fill="#d40808"/><polyline points="61.8,5.4 66.0,28.0" fill="none" stroke="#8a0000" stroke-width="0.5"/><polyline points="65.8,4.1 62.0,14.0" fill="none" stroke="#8a0000" stroke-width="0.5"/><polyline points="71.2,0.0 76.0,28.0" fill="none" stroke="#8a0000" stroke-width="0.5"/><ellipse cx="55.5" cy="22.5" rx="4.0" ry="6.0" fill="#e8e8e8" stroke="#7a2020" stroke-width="0.4"/><ellipse cx="55.8" cy="23.0" rx="2.2" ry="3.2" fill="#7a7c8c"/><polyline points="40.0,17.0 46.0,17.5 46.5,22.0 41.0,24.0 40.0,17.0" fill="none" stroke="#d02020" stroke-width="0.6"/><polyline points="43.5,13.5 54.0,21.0" fill="none" stroke="#b0b0b0" stroke-width="0.9"/><ellipse cx="38.7" cy="8.1" rx="7.5" ry="7.5" fill="#7a7c8c" stroke="#e0e0e0" stroke-width="0.8"/><path d="M38.5,0.8 A7.4,7.4 0 0 1 40,15.5 L43,9Z" fill="#d40808"/><polygon points="33.0,10.0 37.0,7.0 40.0,9.5 36.0,13.5" fill="#e0e0e4"/><polyline points="19.8,17.5 27.0,17.5" fill="none" stroke="#33343c" stroke-width="0.8" stroke-dasharray="1.6 0.5"/><polyline points="19.8,19.2 24.5,19.2" fill="none" stroke="#33343c" stroke-width="0.6"/></svg></i></div>
<div class="fl" style="left:1087px">step3.2</div>
<div class="film" style="left:1189px"><b class="t"></b><b class="b"></b><i><svg width="85" height="40" viewBox="0 0 85 40" style="display:block"><polygon points="5.1,27.0 21.4,20.3 78.3,27.0 78.3,32.5 64.7,37.9 6.5,31.1" fill="#f4f4f8" stroke="#b4b4bc" stroke-width="0.3"/><polygon points="5.1,27.0 64.7,33.5 64.7,37.9 6.5,31.1" fill="#e4e4ea"/><polygon points="64.7,33.5 78.3,27.0 78.3,32.5 64.7,37.9" fill="#c8c8d0"/><polygon points="14.6,23.8 24.1,21.7 75.6,27.9 64.7,31.1" fill="#1a1a1e"/><polygon points="32.2,25.7 43.1,8.9 47.1,10.8 49.8,25.7 45.8,29.8 36.3,29.0" fill="#d40808"/><ellipse cx="40.5" cy="24.0" rx="2.2" ry="2.6" fill="#e8e8e8" stroke="#7a2020" stroke-width="0.3"/><ellipse cx="40.5" cy="24.0" rx="1.0" ry="1.2" fill="#6a6c7c"/></svg></i></div>
<div class="fl" style="left:1191px">step3.3</div>
</body>
</html>
